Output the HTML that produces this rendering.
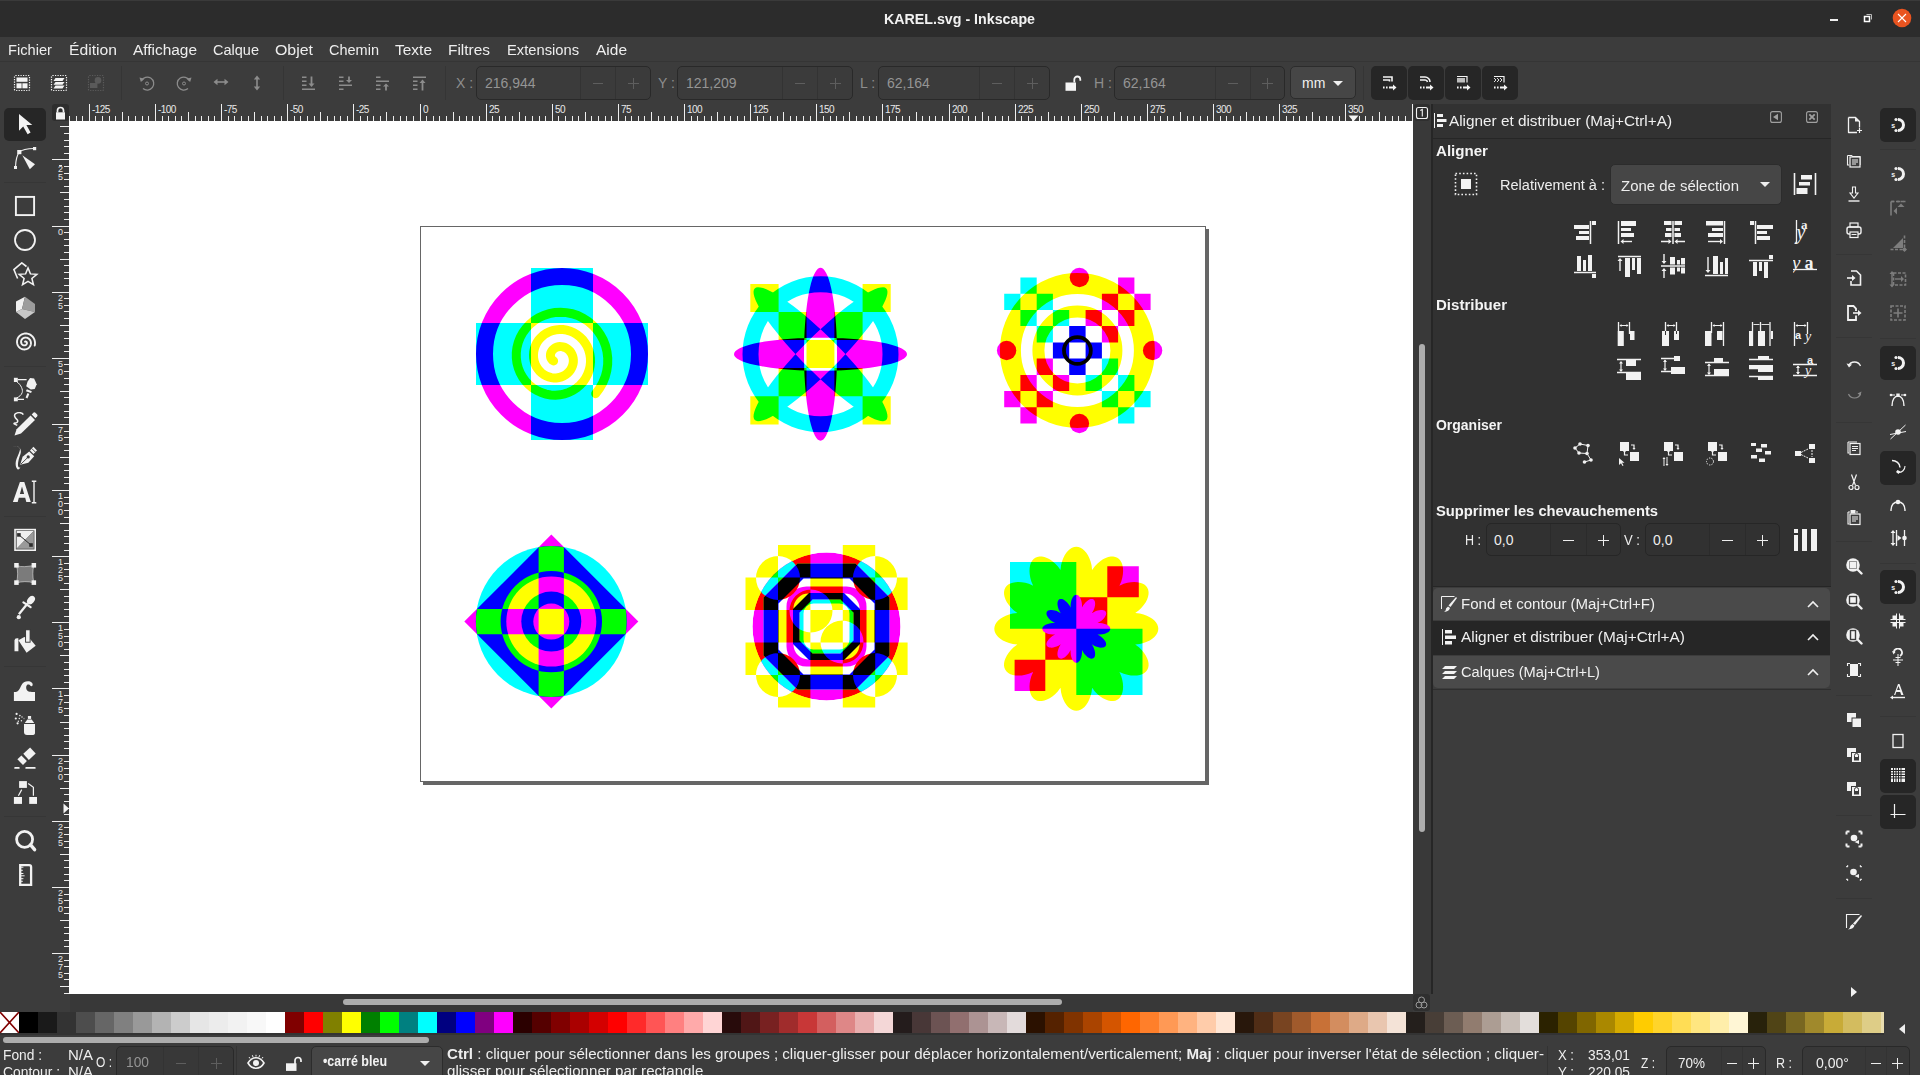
<!DOCTYPE html><html><head><meta charset="utf-8"><style>html,body{margin:0;padding:0}body{width:1920px;height:1075px;position:relative;overflow:hidden;background:#3c3c3c;font-family:"Liberation Sans",sans-serif}svg{display:block}</style></head><body><div style="position:absolute;left:0px;top:0px;width:1920px;height:37px;background:#2c2c2c;"></div>
<div style="position:absolute;left:0px;top:0px;width:1920px;height:1px;background:#3a3a3a;"></div>
<div style="position:absolute;left:884px;top:12.15px;font-size:14px;line-height:14px;height:14px;color:#f2f2f2;font-weight:700;white-space:pre;transform:scaleX(1.0161);transform-origin:0 0;">KAREL.svg - Inkscape</div>
<div style="position:absolute;left:1830px;top:19px;width:8px;height:2px;background:#f0f0f0;"></div>
<svg style="position:absolute;left:1862px;top:12px;" width="12" height="12" viewBox="0 0 12 12"><path d="M4.5 2.5h5v5" fill="none" stroke="#bbb" stroke-width="1"/><rect x="2.5" y="4.5" width="5" height="5" fill="none" stroke="#fff" stroke-width="1.5"/></svg>
<svg style="position:absolute;left:1892px;top:8px;" width="20" height="20" viewBox="0 0 20 20"><circle cx="10" cy="10" r="9.3" fill="#e95420"/><path d="M6 6l8 8M14 6l-8 8" stroke="#fff" stroke-width="1.1"/></svg>
<div style="position:absolute;left:0px;top:61px;width:1920px;height:1px;background:#353535;"></div>
<div style="position:absolute;left:8px;top:43.15px;font-size:14px;line-height:14px;height:14px;color:#eeeeee;font-weight:400;white-space:pre;transform:scaleX(1.0472);transform-origin:0 0;">Fichier</div>
<div style="position:absolute;left:69px;top:43.15px;font-size:14px;line-height:14px;height:14px;color:#eeeeee;font-weight:400;white-space:pre;transform:scaleX(1.1212);transform-origin:0 0;">Édition</div>
<div style="position:absolute;left:133px;top:43.15px;font-size:14px;line-height:14px;height:14px;color:#eeeeee;font-weight:400;white-space:pre;transform:scaleX(1.1011);transform-origin:0 0;">Affichage</div>
<div style="position:absolute;left:213px;top:43.15px;font-size:14px;line-height:14px;height:14px;color:#eeeeee;font-weight:400;white-space:pre;transform:scaleX(1.0366);transform-origin:0 0;">Calque</div>
<div style="position:absolute;left:275px;top:43.15px;font-size:14px;line-height:14px;height:14px;color:#eeeeee;font-weight:400;white-space:pre;transform:scaleX(1.1354);transform-origin:0 0;">Objet</div>
<div style="position:absolute;left:329px;top:43.15px;font-size:14px;line-height:14px;height:14px;color:#eeeeee;font-weight:400;white-space:pre;transform:scaleX(1.0363);transform-origin:0 0;">Chemin</div>
<div style="position:absolute;left:395px;top:43.15px;font-size:14px;line-height:14px;height:14px;color:#eeeeee;font-weight:400;white-space:pre;transform:scaleX(1.1055);transform-origin:0 0;">Texte</div>
<div style="position:absolute;left:448px;top:43.15px;font-size:14px;line-height:14px;height:14px;color:#eeeeee;font-weight:400;white-space:pre;transform:scaleX(1.1016);transform-origin:0 0;">Filtres</div>
<div style="position:absolute;left:507px;top:43.15px;font-size:14px;line-height:14px;height:14px;color:#eeeeee;font-weight:400;white-space:pre;transform:scaleX(1.0513);transform-origin:0 0;">Extensions</div>
<div style="position:absolute;left:596px;top:43.15px;font-size:14px;line-height:14px;height:14px;color:#eeeeee;font-weight:400;white-space:pre;transform:scaleX(1.1059);transform-origin:0 0;">Aide</div>
<svg style="position:absolute;left:13px;top:74px;" width="18" height="18" viewBox="0 0 18 18"><rect x="1.5" y="1.5" width="15" height="15" fill="none" stroke="#f4f4f4" stroke-width="1.2" stroke-dasharray="1.2 1.3" rx="1"/><rect x="3.5" y="3.5" width="11" height="4.3" fill="#f4f4f4"/><rect x="3.5" y="9.3" width="5.1" height="5" fill="#f4f4f4"/><rect x="9.4" y="9.3" width="5.1" height="5" fill="#f4f4f4"/></svg>
<svg style="position:absolute;left:50px;top:74px;" width="18" height="18" viewBox="0 0 18 18"><rect x="1.5" y="1.5" width="15" height="15" fill="none" stroke="#f4f4f4" stroke-width="1.2" stroke-dasharray="1.2 1.3" rx="1"/><path d="M5.5 4h9l-2 3h-9zM5.5 8h9l-2 2.8h-9zM5.5 11.5h9l-2 3h-9z" fill="#f4f4f4"/></svg>
<svg style="position:absolute;left:87px;top:74px;" width="18" height="18" viewBox="0 0 18 18"><rect x="1.5" y="1.5" width="15" height="15" fill="none" stroke="#5a5a5a" stroke-width="1.2" stroke-dasharray="1.2 1.3" rx="1"/><circle cx="11" cy="6.4" r="3.3" fill="#5a5a5a"/><rect x="3" y="9" width="7.4" height="5" fill="#5a5a5a"/></svg>
<div style="position:absolute;left:121px;top:66px;width:1px;height:34px;background:#353535;"></div>
<svg style="position:absolute;left:138px;top:74px;" width="18" height="18" viewBox="0 0 18 18"><path d="M3.5 6.5A6.5 6.5 0 1 1 5 14.5" fill="none" stroke="#8c8c8c" stroke-width="1.3"/><path d="M1.5 3.5l5 1.2-3.6 3.2z" fill="#8c8c8c"/><circle cx="9" cy="9.5" r="1.5" fill="none" stroke="#8c8c8c" stroke-width="1"/></svg>
<svg style="position:absolute;left:175px;top:74px;" width="18" height="18" viewBox="0 0 18 18"><path d="M14.5 6.5A6.5 6.5 0 1 0 13 14.5" fill="none" stroke="#8c8c8c" stroke-width="1.3"/><path d="M16.5 3.5l-5 1.2 3.6 3.2z" fill="#8c8c8c"/><circle cx="9" cy="9.5" r="1.5" fill="none" stroke="#8c8c8c" stroke-width="1"/></svg>
<svg style="position:absolute;left:213px;top:76px;" width="16" height="12" viewBox="0 0 16 12"><path d="M3 6h10" stroke="#8c8c8c" stroke-width="1.6"/><path d="M0.5 6l4-3.2v6.4zM15.5 6l-4-3.2v6.4z" fill="#8c8c8c"/></svg>
<svg style="position:absolute;left:251px;top:75px;" width="12" height="16" viewBox="0 0 12 16"><path d="M6 3v10" stroke="#8c8c8c" stroke-width="1.6"/><path d="M6 0.5l-3.2 4h6.4zM6 15.5l-3.2-4h6.4z" fill="#8c8c8c"/></svg>
<div style="position:absolute;left:283px;top:66px;width:1px;height:34px;background:#353535;"></div>
<svg style="position:absolute;left:302px;top:76px;" width="14" height="15" viewBox="0 0 14 15"><path d="M0 0.5h4.5v1.6h-4.5zM0 4.5h4.5v1.6h-4.5zM0 8.5h4.5v1.6h-4.5zM0 12.5h13v1.6h-13z" fill="#8c8c8c"/><path d="M9.5 0.5v8" stroke="#8c8c8c" stroke-width="1.8"/><path d="M6.5 7.5h6l-3 3.5z" fill="#8c8c8c"/></svg>
<svg style="position:absolute;left:339px;top:76px;" width="14" height="15" viewBox="0 0 14 15"><path d="M0 0.5h4.5v1.6h-4.5zM0 4.5h4.5v1.6h-4.5zM0 8.5h13v1.6h-13zM0 12.5h4.5v1.6h-4.5z" fill="#8c8c8c"/><path d="M10 0.5v4" stroke="#8c8c8c" stroke-width="1.8"/><path d="M7 4h6l-3 3z" fill="#8c8c8c"/></svg>
<svg style="position:absolute;left:376px;top:76px;" width="14" height="15" viewBox="0 0 14 15"><path d="M0 0.5h4.5v1.6h-4.5zM0 4.5h13v1.6h-13zM0 8.5h4.5v1.6h-4.5zM0 12.5h4.5v1.6h-4.5z" fill="#8c8c8c"/><path d="M10 10v4.5" stroke="#8c8c8c" stroke-width="1.8"/><path d="M7 10.5h6l-3-3z" fill="#8c8c8c"/></svg>
<svg style="position:absolute;left:413px;top:76px;" width="14" height="15" viewBox="0 0 14 15"><path d="M0 0.5h13v1.6h-13zM0 4.5h4.5v1.6h-4.5zM0 8.5h4.5v1.6h-4.5zM0 12.5h4.5v1.6h-4.5z" fill="#8c8c8c"/><path d="M9.5 6v8.5" stroke="#8c8c8c" stroke-width="1.8"/><path d="M6.5 7h6l-3-3.5z" fill="#8c8c8c"/></svg>
<div style="position:absolute;left:445px;top:66px;width:1px;height:34px;background:#353535;"></div>
<div style="position:absolute;left:456px;top:76.15px;font-size:14px;line-height:14px;height:14px;color:#8e8e8e;font-weight:400;white-space:pre;">X :</div>
<div style="position:absolute;left:476px;top:66px;width:175px;height:34px;background:#3b3b3b;border:1px solid #292929;border-radius:5px;box-sizing:border-box;"></div>
<div style="position:absolute;left:580px;top:67px;width:1px;height:32px;background:#333333;"></div>
<div style="position:absolute;left:615px;top:67px;width:1px;height:32px;background:#333333;"></div>
<div style="position:absolute;left:485px;top:76.15px;font-size:14px;line-height:14px;height:14px;color:#959595;font-weight:400;white-space:pre;">216,944</div>
<div style="position:absolute;left:592.5px;top:83px;width:10px;height:1px;background:#5e5e5e;"></div>
<div style="position:absolute;left:627.5px;top:83px;width:11px;height:1px;background:#5e5e5e;"></div>
<div style="position:absolute;left:632.5px;top:78px;width:1px;height:11px;background:#5e5e5e;"></div>
<div style="position:absolute;left:658px;top:76.15px;font-size:14px;line-height:14px;height:14px;color:#8e8e8e;font-weight:400;white-space:pre;">Y :</div>
<div style="position:absolute;left:677px;top:66px;width:176px;height:34px;background:#3b3b3b;border:1px solid #292929;border-radius:5px;box-sizing:border-box;"></div>
<div style="position:absolute;left:782px;top:67px;width:1px;height:32px;background:#333333;"></div>
<div style="position:absolute;left:817px;top:67px;width:1px;height:32px;background:#333333;"></div>
<div style="position:absolute;left:686px;top:76.15px;font-size:14px;line-height:14px;height:14px;color:#959595;font-weight:400;white-space:pre;">121,209</div>
<div style="position:absolute;left:794.5px;top:83px;width:10px;height:1px;background:#5e5e5e;"></div>
<div style="position:absolute;left:829.5px;top:83px;width:11px;height:1px;background:#5e5e5e;"></div>
<div style="position:absolute;left:834.5px;top:78px;width:1px;height:11px;background:#5e5e5e;"></div>
<div style="position:absolute;left:860px;top:76.15px;font-size:14px;line-height:14px;height:14px;color:#8e8e8e;font-weight:400;white-space:pre;">L :</div>
<div style="position:absolute;left:878px;top:66px;width:172px;height:34px;background:#3b3b3b;border:1px solid #292929;border-radius:5px;box-sizing:border-box;"></div>
<div style="position:absolute;left:979px;top:67px;width:1px;height:32px;background:#333333;"></div>
<div style="position:absolute;left:1014px;top:67px;width:1px;height:32px;background:#333333;"></div>
<div style="position:absolute;left:887px;top:76.15px;font-size:14px;line-height:14px;height:14px;color:#959595;font-weight:400;white-space:pre;">62,164</div>
<div style="position:absolute;left:991.5px;top:83px;width:10px;height:1px;background:#5e5e5e;"></div>
<div style="position:absolute;left:1026.5px;top:83px;width:11px;height:1px;background:#5e5e5e;"></div>
<div style="position:absolute;left:1031.5px;top:78px;width:1px;height:11px;background:#5e5e5e;"></div>
<div style="position:absolute;left:1094px;top:76.15px;font-size:14px;line-height:14px;height:14px;color:#8e8e8e;font-weight:400;white-space:pre;">H :</div>
<div style="position:absolute;left:1114px;top:66px;width:171px;height:34px;background:#3b3b3b;border:1px solid #292929;border-radius:5px;box-sizing:border-box;"></div>
<div style="position:absolute;left:1215px;top:67px;width:1px;height:32px;background:#333333;"></div>
<div style="position:absolute;left:1250px;top:67px;width:1px;height:32px;background:#333333;"></div>
<div style="position:absolute;left:1123px;top:76.15px;font-size:14px;line-height:14px;height:14px;color:#959595;font-weight:400;white-space:pre;">62,164</div>
<div style="position:absolute;left:1227.5px;top:83px;width:10px;height:1px;background:#5e5e5e;"></div>
<div style="position:absolute;left:1262.0px;top:83px;width:11px;height:1px;background:#5e5e5e;"></div>
<div style="position:absolute;left:1267.0px;top:78px;width:1px;height:11px;background:#5e5e5e;"></div>
<svg style="position:absolute;left:1064px;top:75px;" width="18" height="17" viewBox="0 0 18 17"><path d="M10.3 7.5V4.5a3 3 0 0 1 6 0v1.2" fill="none" stroke="#f4f4f4" stroke-width="1.8"/><rect x="1.5" y="7.5" width="10.5" height="8.3" fill="#f4f4f4"/></svg>
<div style="position:absolute;left:1290px;top:66px;width:66px;height:33px;background:#464646;border:1px solid #2c2c2c;border-radius:5px;box-sizing:border-box;"></div>
<div style="position:absolute;left:1302px;top:76.15px;font-size:14px;line-height:14px;height:14px;color:#f0f0f0;font-weight:400;white-space:pre;">mm</div>
<svg style="position:absolute;left:1332px;top:80px;" width="12" height="7" viewBox="0 0 12 7"><path d="M1 1h10l-5 5z" fill="#f0f0f0"/></svg>
<div style="position:absolute;left:1363px;top:66px;width:1px;height:34px;background:#353535;"></div>
<div style="position:absolute;left:1371px;top:66px;width:36px;height:34px;background:#262626;border-radius:5px;"></div>
<svg style="position:absolute;left:1382px;top:75px;" width="16" height="16" viewBox="0 0 16 16"><path d="M1 2h9v4.5M1 5h6.5v1.5" fill="none" stroke="#f4f4f4" stroke-width="1.6"/><path d="M1 12.5h1.6M4 12.5h1.6M7 12.5h5" stroke="#f4f4f4" stroke-width="1.8"/><path d="M11 9.5l3.5 3-3.5 3z" fill="#f4f4f4"/></svg>
<div style="position:absolute;left:1408px;top:66px;width:36px;height:34px;background:#262626;border-radius:5px;"></div>
<svg style="position:absolute;left:1419px;top:75px;" width="16" height="16" viewBox="0 0 16 16"><path d="M1 2h5a5 5 0 0 1 5 5M1 5h5a2.5 2.5 0 0 1 2.5 2" fill="none" stroke="#f4f4f4" stroke-width="1.6"/><path d="M1 12.5h1.6M4 12.5h1.6M7 12.5h5" stroke="#f4f4f4" stroke-width="1.8"/><path d="M11 9.5l3.5 3-3.5 3z" fill="#f4f4f4"/></svg>
<div style="position:absolute;left:1445px;top:66px;width:36px;height:34px;background:#262626;border-radius:5px;"></div>
<svg style="position:absolute;left:1456px;top:75px;" width="16" height="16" viewBox="0 0 16 16"><path d="M1 1.5h10v6" fill="none" stroke="#f4f4f4" stroke-width="1.2"/><rect x="1" y="3" width="8" height="4.5" fill="#bdbdbd"/><path d="M1 12.5h1.6M4 12.5h1.6M7 12.5h5" stroke="#f4f4f4" stroke-width="1.8"/><path d="M11 9.5l3.5 3-3.5 3z" fill="#f4f4f4"/></svg>
<div style="position:absolute;left:1482px;top:66px;width:36px;height:34px;background:#262626;border-radius:5px;"></div>
<svg style="position:absolute;left:1493px;top:75px;" width="16" height="16" viewBox="0 0 16 16"><path d="M1 1.5h10v6" fill="none" stroke="#f4f4f4" stroke-width="1.2"/><path d="M1 3l2 2-2 2M4 3l2 2-2 2M7 3l2 2-2 2" fill="none" stroke="#e0e0e0" stroke-width="1"/><path d="M1 12.5h1.6M4 12.5h1.6M7 12.5h5" stroke="#f4f4f4" stroke-width="1.8"/><path d="M11 9.5l3.5 3-3.5 3z" fill="#f4f4f4"/></svg>
<div style="position:absolute;left:4px;top:108px;width:42px;height:33px;background:#262626;border-radius:5px;"></div>
<div style="position:absolute;left:4px;top:182px;width:42px;height:1px;background:#363636;"></div>
<div style="position:absolute;left:4px;top:366px;width:42px;height:1px;background:#363636;"></div>
<div style="position:absolute;left:4px;top:516px;width:42px;height:1px;background:#363636;"></div>
<div style="position:absolute;left:4px;top:666px;width:42px;height:1px;background:#363636;"></div>
<div style="position:absolute;left:4px;top:816px;width:42px;height:1px;background:#363636;"></div>
<svg style="position:absolute;left:13px;top:112px;" width="26" height="26" viewBox="0 0 26 26"><path d="M6 2V18.8L10.2 14.6L14.6 22.2L17.6 20.5L13.4 13H19.3Z" fill="#f2f2f2"/></svg>
<svg style="position:absolute;left:13px;top:146px;" width="26" height="26" viewBox="0 0 26 26"><path d="M2.5 21C2.8 13 4.5 8.5 6.2 6.2C9 3.5 15 2.6 21.5 2.5" fill="none" stroke="#f2f2f2" stroke-width="1.1"/><rect x="1" y="20" width="3" height="3" fill="#f2f2f2"/><rect x="4.2" y="4" width="4.2" height="4.2" fill="#f2f2f2"/><rect x="20" y="1" width="3.2" height="3.2" fill="#f2f2f2"/><path d="M9.3 9.3L22 18.2L16.8 23.2Z" fill="#f2f2f2"/></svg>
<svg style="position:absolute;left:13px;top:194px;" width="26" height="26" viewBox="0 0 26 26"><rect x="2.9" y="2.9" width="18.2" height="18.2" fill="none" stroke="#f2f2f2" stroke-width="1.9"/></svg>
<svg style="position:absolute;left:13px;top:228px;" width="26" height="26" viewBox="0 0 26 26"><circle cx="12" cy="12" r="10" fill="none" stroke="#f2f2f2" stroke-width="1.8"/></svg>
<svg style="position:absolute;left:13px;top:262px;" width="26" height="26" viewBox="0 0 26 26"><path d="M4.6 16.5L0.9 7.6L8.8 0.9L13.5 4.5" fill="none" stroke="#f2f2f2" stroke-width="1.6"/><path d="M15.00 5.90 L17.41 11.88 L23.84 12.33 L18.90 16.47 L20.47 22.72 L15.00 19.30 L9.53 22.72 L11.10 16.47 L6.16 12.33 L12.59 11.88Z" fill="none" stroke="#f2f2f2" stroke-width="1.5" stroke-linejoin="miter"/></svg>
<svg style="position:absolute;left:13px;top:296px;" width="26" height="26" viewBox="0 0 26 26"><path d="M9 13L3 16V5.5L12 0.8Z" fill="#f0f0f0"/><path d="M9 13L12 0.8L22 8V16Z" fill="#9c9c9c"/><path d="M9 13L22 16L12 23L3 16Z" fill="#c8c8c8"/></svg>
<svg style="position:absolute;left:12px;top:330px;" width="26" height="26" viewBox="0 0 26 26"><path d="M13.00 11.70 L13.08 11.64 L13.16 11.60 L13.26 11.56 L13.37 11.53 L13.48 11.52 L13.59 11.51 L13.72 11.52 L13.84 11.55 L13.97 11.59 L14.09 11.64 L14.21 11.71 L14.33 11.80 L14.44 11.90 L14.55 12.01 L14.64 12.14 L14.73 12.28 L14.80 12.44 L14.85 12.60 L14.90 12.78 L14.92 12.96 L14.93 13.15 L14.91 13.35 L14.88 13.54 L14.83 13.74 L14.75 13.94 L14.66 14.13 L14.54 14.32 L14.41 14.50 L14.25 14.67 L14.07 14.83 L13.88 14.97 L13.67 15.10 L13.44 15.20 L13.20 15.29 L12.94 15.36 L12.68 15.40 L12.41 15.41 L12.13 15.41 L11.85 15.37 L11.57 15.31 L11.29 15.22 L11.02 15.10 L10.75 14.95 L10.50 14.78 L10.25 14.58 L10.03 14.35 L9.82 14.10 L9.63 13.83 L9.47 13.54 L9.33 13.23 L9.23 12.90 L9.15 12.56 L9.10 12.21 L9.08 11.85 L9.10 11.48 L9.15 11.11 L9.24 10.75 L9.36 10.39 L9.52 10.03 L9.71 9.69 L9.94 9.36 L10.20 9.05 L10.48 8.77 L10.80 8.50 L11.15 8.27 L11.52 8.06 L11.91 7.89 L12.32 7.75 L12.75 7.65 L13.19 7.59 L13.64 7.57 L14.10 7.59 L14.55 7.65 L15.01 7.76 L15.45 7.91 L15.89 8.10 L16.31 8.33 L16.72 8.61 L17.10 8.92 L17.45 9.27 L17.77 9.65 L18.06 10.07 L18.32 10.51 L18.53 10.99 L18.70 11.48 L18.83 12.00 L18.91 12.52 L18.94 13.06 L18.93 13.61 L18.86 14.15 L18.74 14.70 L18.57 15.23 L18.35 15.75 L18.09 16.26 L17.77 16.74 L17.41 17.19 L17.00 17.62 L16.56 18.01 L16.07 18.36 L15.55 18.67 L15.01 18.93 L14.43 19.14 L13.83 19.30 L13.22 19.41 L12.59 19.46 L11.96 19.45 L11.32 19.38 L10.69 19.26 L10.06 19.08 L9.45 18.84 L8.86 18.54 L8.30 18.19 L7.76 17.78 L7.26 17.32 L6.80 16.82 L6.39 16.27 L6.02 15.69 L5.70 15.06 L5.45 14.41 L5.25 13.73 L5.11 13.03 L5.03 12.31 L5.03 11.59 L5.08 10.86 L5.21 10.14 L5.40 9.42 L5.65 8.72 L5.98 8.04 L6.36 7.39 L6.80 6.77 L7.31 6.19 L7.86 5.66 L8.47 5.17 L9.12 4.74 L9.82 4.37 L10.55 4.06 L11.31 3.81 L12.09 3.64 L12.89 3.53 L13.71 3.50 L14.53 3.55 L15.34 3.66 L16.15 3.86 L16.94 4.12 L17.71 4.46 L18.45 4.87 L19.16 5.35 L19.82 5.89 L20.43 6.50 L20.99 7.16 L21.49 7.87 L21.93 8.64 L22.30 9.44 L22.59 10.28 L22.81 11.14 L22.95 12.03 L23.01 12.93 L22.99 13.84 L22.89 14.75 L22.70 15.65" fill="none" stroke="#f2f2f2" stroke-width="1.9" stroke-linecap="round"/></svg>
<svg style="position:absolute;left:13px;top:377px;" width="26" height="26" viewBox="0 0 26 26"><rect x="0.9" y="0.8" width="3.9" height="4.2" fill="#f2f2f2"/><rect x="0.9" y="20.4" width="3.9" height="3.9" fill="#f2f2f2"/><path d="M4.8 2.6H13.6M4.8 22.4H11" stroke="#f2f2f2" stroke-width="1.2"/><path d="M3.5 4.5C8.5 8 10 13 9.2 15.5C8.5 18 6 20 3.5 21" fill="none" stroke="#f2f2f2" stroke-width="1"/><path d="M14.5 4.7L17.1 1.1L21.1 1.6L23.7 7.3L21.7 11.9L17.8 12.5L13.2 9.3Z" fill="#f2f2f2"/><path d="M13.9 12.3L18.8 14.2L18.1 15.9L12.9 14.2Z" fill="#f2f2f2"/><path d="M15.4 16.5L13.5 21" stroke="#f2f2f2" stroke-width="2"/></svg>
<svg style="position:absolute;left:13px;top:412px;" width="26" height="26" viewBox="0 0 26 26"><path d="M1.5 23.5L3.6 17.2L17.6 3.6L22 8L8 21.6Z" fill="#f2f2f2"/><path d="M18.7 2.4L20.6 0.6Q21.5 0 22.4 0.7L24.2 2.5Q24.9 3.4 24.2 4.3L22.4 6.2Z" fill="#f2f2f2"/><path d="M10.3 2.6C9.3 0.6 5.5 -0.2 2.6 1.7C0.5 3.2 2 6 3.8 7.4C5.2 8.6 5 10.3 3.2 10.9C2.2 11.2 1.2 10.8 1 11.6C2 12.3 3.2 12.8 4.3 13.3" fill="none" stroke="#f2f2f2" stroke-width="1.5"/></svg>
<svg style="position:absolute;left:13px;top:446px;" width="26" height="26" viewBox="0 0 26 26"><path d="M0 1C2.5 -0.3 6.5 0 7 3C7.2 5 5 9 3.5 13C2 17 2.5 21.5 4.5 23.2C5.5 24 7 22.5 7.3 21.2C6.5 22 5.2 21.5 5 19.5C4.7 17 6 12 7.3 8.5C8.5 5 8 1.5 4 0.5C2.5 0.1 1 0.4 0 1Z" fill="#f2f2f2"/><path d="M7.2 18.8L9.6 10.8L16.2 5.6L21.2 10.2L15.3 16.8Z" fill="#f2f2f2"/><circle cx="15.2" cy="10.9" r="1.6" fill="#3c3c3c"/><path d="M14.3 11.9L8 18" stroke="#3c3c3c" stroke-width="0.9"/><path d="M17 4.4L20.4 0.8L24 4.5L20.5 8Z" fill="#f2f2f2"/><path d="M18.8 2.5L22.3 6" stroke="#3c3c3c" stroke-width="0.9"/></svg>
<svg style="position:absolute;left:12px;top:480px;" width="26" height="26" viewBox="0 0 26 26"><path d="M0.9 21.9L7.9 2H12.3L18.8 21.9H14.3L13.2 17.8H6.8L5.7 21.9ZM7.9 14H12.1L10 6.4Z" fill="#f2f2f2"/><path d="M22 1.2V22.7M19.8 1.2H24.3M19.8 22.7H24.3" stroke="#f2f2f2" stroke-width="1.4"/></svg>
<svg style="position:absolute;left:13px;top:528px;" width="26" height="26" viewBox="0 0 26 26"><rect x="2" y="1.6" width="20.2" height="20.6" fill="none" stroke="#f2f2f2" stroke-width="1.6"/><path d="M3.6 3.1H20.8L3.6 20.8Z" fill="#efefef"/><path d="M20.8 3.1V20.8H3.6Z" fill="#9a9a9a"/><path d="M5.9 6.9L18 17" stroke="#2e2e2e" stroke-width="1"/><rect x="4.1" y="5.1" width="3.6" height="3.6" fill="#2e2e2e"/><rect x="16.2" y="15.2" width="3.6" height="3.6" fill="#2e2e2e"/></svg>
<svg style="position:absolute;left:13px;top:562px;" width="26" height="26" viewBox="0 0 26 26"><defs><pattern id="chk" width="2" height="2" patternUnits="userSpaceOnUse" patternTransform="rotate(12)"><rect width="2" height="2" fill="#3a3a3a"/><circle cx="1" cy="1" r="0.75" fill="#dcdcdc"/></pattern></defs><path d="M3.5 3.5C9 5.5 14 4.5 20.8 3.5C19.5 9 19.5 14 20.8 20.8C14.5 19 9 19.5 3.5 20.8C5 14.5 5 9 3.5 3.5Z" fill="url(#chk)" stroke="#e0e0e0" stroke-width="0.6"/><g fill="#f2f2f2"><rect x="1.2" y="1" width="4.5" height="4.6"/><rect x="18.6" y="1" width="4.5" height="4.6"/><rect x="1.2" y="18.3" width="4.5" height="4.6"/><rect x="18.6" y="18.3" width="4.5" height="4.6"/></g></svg>
<svg style="position:absolute;left:13px;top:594px;" width="26" height="26" viewBox="0 0 26 26"><ellipse cx="18" cy="6.2" rx="3.3" ry="4.7" transform="rotate(40 18 6.2)" fill="#f2f2f2"/><path d="M10.4 8.3L17.6 13.1" stroke="#f2f2f2" stroke-width="2.2" stroke-linecap="round"/><path d="M14.8 9.2L5.9 20.2" stroke="#f2f2f2" stroke-width="2.3"/><circle cx="5.8" cy="23.2" r="2.1" fill="#f2f2f2"/></svg>
<svg style="position:absolute;left:13px;top:628px;" width="26" height="26" viewBox="0 0 26 26"><path d="M5.4 12.2L11.3 9L17.1 10.9L22.7 17.7L13.6 24.8Z" fill="#f2f2f2"/><path d="M1.5 12.5Q1.5 10.3 4 10.3H5.4V23.3H1.5Z" fill="#f2f2f2"/><rect x="12.6" y="1.8" width="4.5" height="12.4" fill="#f2f2f2" stroke="#2f2f2f" stroke-width="0.9"/></svg>
<svg style="position:absolute;left:13px;top:680px;" width="26" height="26" viewBox="0 0 26 26"><path d="M0.9 11.9H3C5.5 11.5 6.5 9.5 8 6C9.5 2.5 12 1.2 15 1.2C18 1.2 20.2 3 19.6 5.3C19.2 6.6 17.8 6.4 17.4 5.8C16.8 4.6 15 4.2 14 5.1C12.5 6.6 13 10.6 15.6 11.5C17.2 12 20 11.9 22 11.9V21H0.9Z" fill="#f2f2f2"/></svg>
<svg style="position:absolute;left:13px;top:712px;" width="26" height="26" viewBox="0 0 26 26"><rect x="14.9" y="4" width="3.2" height="2.9" fill="#f2f2f2"/><path d="M11.8 10.9L14.3 7.6H18.7L21.2 10.9Z" fill="#f2f2f2"/><path d="M11 12H22V21Q22 23 19 23H14Q11 23 11 20Z" fill="#f2f2f2"/><g fill="#f2f2f2"><circle cx="3.6" cy="1.9" r="1.1"/><circle cx="6.9" cy="3.6" r="0.8"/><circle cx="2.8" cy="6.5" r="1.1"/><circle cx="6.3" cy="6.5" r="0.7"/><circle cx="9" cy="5" r="0.7"/><circle cx="5.3" cy="9.2" r="0.7"/><circle cx="8.4" cy="8.8" r="0.7"/><circle cx="4.6" cy="11.3" r="1.1"/></g><circle cx="11" cy="6.6" r="0.8" fill="#888"/></svg>
<svg style="position:absolute;left:13px;top:744px;" width="26" height="26" viewBox="0 0 26 26"><path d="M17.1 3.5L22.7 9.4L15.8 15.9L10.3 9.7Z" fill="#f2f2f2"/><path d="M8.4 11.4L13.9 16.9L10 21.1L4.4 15.3Z" fill="#f2f2f2"/><rect x="1.2" y="23" width="5.5" height="1.8" rx="0.9" fill="#f2f2f2"/><rect x="12.3" y="23" width="10.4" height="1.8" rx="0.9" fill="#f2f2f2"/></svg>
<svg style="position:absolute;left:13px;top:780px;" width="26" height="26" viewBox="0 0 26 26"><rect x="6.1" y="1.1" width="7.8" height="6.8" fill="#f2f2f2"/><rect x="0.9" y="17" width="8.1" height="6.9" fill="#f2f2f2"/><rect x="16.2" y="17" width="7.8" height="6.9" fill="#f2f2f2"/><path d="M15.2 3.4L20.4 7.3V15.8M8.7 9.6L5.4 15.8" fill="none" stroke="#f2f2f2" stroke-width="1.2"/></svg>
<svg style="position:absolute;left:13px;top:827px;" width="26" height="26" viewBox="0 0 26 26"><circle cx="11.6" cy="12.3" r="8" fill="none" stroke="#f2f2f2" stroke-width="2.8"/><path d="M17.6 17.9L21.6 22.6" stroke="#f2f2f2" stroke-width="3.4" stroke-linecap="round"/></svg>
<svg style="position:absolute;left:13px;top:862px;" width="26" height="26" viewBox="0 0 26 26"><path d="M7.2 3.1H16.2Q18.1 3.1 18.1 5V22.9H7.2Z" fill="none" stroke="#f2f2f2" stroke-width="2.3"/><path d="M7.5 5.2H10.4M7.5 8.3H9.8M7.5 11.5H10.4M7.5 13.8H11.6M7.5 16.7H10.4M7.5 19.3H9.8" stroke="#f2f2f2" stroke-width="1"/></svg>
<div style="position:absolute;left:52px;top:104px;width:17px;height:17px;background:#2e2e2e;border-radius:3px;"></div>
<svg style="position:absolute;left:54px;top:106px;" width="13" height="14" viewBox="0 0 13 14"><path d="M3.5 6.5V4.5a3 3 0 0 1 6 0v2" fill="none" stroke="#f4f4f4" stroke-width="1.7"/><rect x="2" y="6.3" width="9" height="7.2" fill="#f4f4f4"/></svg>
<svg style="position:absolute;left:69px;top:104px;" width="1344" height="17" viewBox="0 0 1344 17"><path d="M0.5 12V17M7.5 12V17M13.5 12V17M20.5 0V17M26.5 12V17M33.5 12V17M40.5 12V17M46.5 12V17M53.5 8V17M59.5 12V17M66.5 12V17M73.5 12V17M79.5 12V17M86.5 0V17M93.5 12V17M99.5 12V17M106.5 12V17M112.5 12V17M119.5 8V17M126.5 12V17M132.5 12V17M139.5 12V17M145.5 12V17M152.5 0V17M159.5 12V17M165.5 12V17M172.5 12V17M179.5 12V17M185.5 8V17M192.5 12V17M198.5 12V17M205.5 12V17M212.5 12V17M218.5 0V17M225.5 12V17M231.5 12V17M238.5 12V17M245.5 12V17M251.5 8V17M258.5 12V17M265.5 12V17M271.5 12V17M278.5 12V17M284.5 0V17M291.5 12V17M298.5 12V17M304.5 12V17M311.5 12V17M317.5 8V17M324.5 12V17M331.5 12V17M337.5 12V17M344.5 12V17M351.5 0V17M357.5 12V17M364.5 12V17M370.5 12V17M377.5 12V17M384.5 8V17M390.5 12V17M397.5 12V17M403.5 12V17M410.5 12V17M417.5 0V17M423.5 12V17M430.5 12V17M436.5 12V17M443.5 12V17M450.5 8V17M456.5 12V17M463.5 12V17M470.5 12V17M476.5 12V17M483.5 0V17M489.5 12V17M496.5 12V17M503.5 12V17M509.5 12V17M516.5 8V17M522.5 12V17M529.5 12V17M536.5 12V17M542.5 12V17M549.5 0V17M556.5 12V17M562.5 12V17M569.5 12V17M575.5 12V17M582.5 8V17M589.5 12V17M595.5 12V17M602.5 12V17M608.5 12V17M615.5 0V17M622.5 12V17M628.5 12V17M635.5 12V17M642.5 12V17M648.5 8V17M655.5 12V17M661.5 12V17M668.5 12V17M675.5 12V17M681.5 0V17M688.5 12V17M694.5 12V17M701.5 12V17M708.5 12V17M714.5 8V17M721.5 12V17M727.5 12V17M734.5 12V17M741.5 12V17M747.5 0V17M754.5 12V17M761.5 12V17M767.5 12V17M774.5 12V17M780.5 8V17M787.5 12V17M794.5 12V17M800.5 12V17M807.5 12V17M813.5 0V17M820.5 12V17M827.5 12V17M833.5 12V17M840.5 12V17M847.5 8V17M853.5 12V17M860.5 12V17M866.5 12V17M873.5 12V17M880.5 0V17M886.5 12V17M893.5 12V17M899.5 12V17M906.5 12V17M913.5 8V17M919.5 12V17M926.5 12V17M933.5 12V17M939.5 12V17M946.5 0V17M952.5 12V17M959.5 12V17M966.5 12V17M972.5 12V17M979.5 8V17M985.5 12V17M992.5 12V17M999.5 12V17M1005.5 12V17M1012.5 0V17M1019.5 12V17M1025.5 12V17M1032.5 12V17M1038.5 12V17M1045.5 8V17M1052.5 12V17M1058.5 12V17M1065.5 12V17M1071.5 12V17M1078.5 0V17M1085.5 12V17M1091.5 12V17M1098.5 12V17M1104.5 12V17M1111.5 8V17M1118.5 12V17M1124.5 12V17M1131.5 12V17M1138.5 12V17M1144.5 0V17M1151.5 12V17M1157.5 12V17M1164.5 12V17M1171.5 12V17M1177.5 8V17M1184.5 12V17M1190.5 12V17M1197.5 12V17M1204.5 12V17M1210.5 0V17M1217.5 12V17M1224.5 12V17M1230.5 12V17M1237.5 12V17M1243.5 8V17M1250.5 12V17M1257.5 12V17M1263.5 12V17M1270.5 12V17M1276.5 0V17M1283.5 12V17M1290.5 12V17M1296.5 12V17M1303.5 12V17M1310.5 8V17M1316.5 12V17M1323.5 12V17M1329.5 12V17M1336.5 12V17M1343.5 0V17" stroke="#eeeeee" stroke-width="1"/></svg>
<div style="position:absolute;left:92px;top:104.53px;font-size:10px;line-height:10px;height:10px;color:#e8e8e8;font-weight:400;white-space:pre;letter-spacing:-0.6px;">-125</div>
<div style="position:absolute;left:158px;top:104.53px;font-size:10px;line-height:10px;height:10px;color:#e8e8e8;font-weight:400;white-space:pre;letter-spacing:-0.6px;">-100</div>
<div style="position:absolute;left:224px;top:104.53px;font-size:10px;line-height:10px;height:10px;color:#e8e8e8;font-weight:400;white-space:pre;letter-spacing:-0.6px;">-75</div>
<div style="position:absolute;left:290px;top:104.53px;font-size:10px;line-height:10px;height:10px;color:#e8e8e8;font-weight:400;white-space:pre;letter-spacing:-0.6px;">-50</div>
<div style="position:absolute;left:356px;top:104.53px;font-size:10px;line-height:10px;height:10px;color:#e8e8e8;font-weight:400;white-space:pre;letter-spacing:-0.6px;">-25</div>
<div style="position:absolute;left:423px;top:104.53px;font-size:10px;line-height:10px;height:10px;color:#e8e8e8;font-weight:400;white-space:pre;letter-spacing:-0.6px;">0</div>
<div style="position:absolute;left:489px;top:104.53px;font-size:10px;line-height:10px;height:10px;color:#e8e8e8;font-weight:400;white-space:pre;letter-spacing:-0.6px;">25</div>
<div style="position:absolute;left:555px;top:104.53px;font-size:10px;line-height:10px;height:10px;color:#e8e8e8;font-weight:400;white-space:pre;letter-spacing:-0.6px;">50</div>
<div style="position:absolute;left:621px;top:104.53px;font-size:10px;line-height:10px;height:10px;color:#e8e8e8;font-weight:400;white-space:pre;letter-spacing:-0.6px;">75</div>
<div style="position:absolute;left:687px;top:104.53px;font-size:10px;line-height:10px;height:10px;color:#e8e8e8;font-weight:400;white-space:pre;letter-spacing:-0.6px;">100</div>
<div style="position:absolute;left:753px;top:104.53px;font-size:10px;line-height:10px;height:10px;color:#e8e8e8;font-weight:400;white-space:pre;letter-spacing:-0.6px;">125</div>
<div style="position:absolute;left:819px;top:104.53px;font-size:10px;line-height:10px;height:10px;color:#e8e8e8;font-weight:400;white-space:pre;letter-spacing:-0.6px;">150</div>
<div style="position:absolute;left:885px;top:104.53px;font-size:10px;line-height:10px;height:10px;color:#e8e8e8;font-weight:400;white-space:pre;letter-spacing:-0.6px;">175</div>
<div style="position:absolute;left:952px;top:104.53px;font-size:10px;line-height:10px;height:10px;color:#e8e8e8;font-weight:400;white-space:pre;letter-spacing:-0.6px;">200</div>
<div style="position:absolute;left:1018px;top:104.53px;font-size:10px;line-height:10px;height:10px;color:#e8e8e8;font-weight:400;white-space:pre;letter-spacing:-0.6px;">225</div>
<div style="position:absolute;left:1084px;top:104.53px;font-size:10px;line-height:10px;height:10px;color:#e8e8e8;font-weight:400;white-space:pre;letter-spacing:-0.6px;">250</div>
<div style="position:absolute;left:1150px;top:104.53px;font-size:10px;line-height:10px;height:10px;color:#e8e8e8;font-weight:400;white-space:pre;letter-spacing:-0.6px;">275</div>
<div style="position:absolute;left:1216px;top:104.53px;font-size:10px;line-height:10px;height:10px;color:#e8e8e8;font-weight:400;white-space:pre;letter-spacing:-0.6px;">300</div>
<div style="position:absolute;left:1282px;top:104.53px;font-size:10px;line-height:10px;height:10px;color:#e8e8e8;font-weight:400;white-space:pre;letter-spacing:-0.6px;">325</div>
<div style="position:absolute;left:1348px;top:104.53px;font-size:10px;line-height:10px;height:10px;color:#e8e8e8;font-weight:400;white-space:pre;letter-spacing:-0.6px;">350</div>
<svg style="position:absolute;left:52px;top:121px;" width="17" height="873" viewBox="0 0 17 873"><path d="M8 5.5H17M12 12.5H17M12 19.5H17M12 25.5H17M12 32.5H17M0 38.5H17M12 45.5H17M12 52.5H17M12 58.5H17M12 65.5H17M8 71.5H17M12 78.5H17M12 85.5H17M12 91.5H17M12 98.5H17M0 105.5H17M12 111.5H17M12 118.5H17M12 124.5H17M12 131.5H17M8 138.5H17M12 144.5H17M12 151.5H17M12 157.5H17M12 164.5H17M0 171.5H17M12 177.5H17M12 184.5H17M12 190.5H17M12 197.5H17M8 204.5H17M12 210.5H17M12 217.5H17M12 224.5H17M12 230.5H17M0 237.5H17M12 243.5H17M12 250.5H17M12 257.5H17M12 263.5H17M8 270.5H17M12 276.5H17M12 283.5H17M12 290.5H17M12 296.5H17M0 303.5H17M12 310.5H17M12 316.5H17M12 323.5H17M12 329.5H17M8 336.5H17M12 343.5H17M12 349.5H17M12 356.5H17M12 362.5H17M0 369.5H17M12 376.5H17M12 382.5H17M12 389.5H17M12 396.5H17M8 402.5H17M12 409.5H17M12 415.5H17M12 422.5H17M12 429.5H17M0 435.5H17M12 442.5H17M12 448.5H17M12 455.5H17M12 462.5H17M8 468.5H17M12 475.5H17M12 481.5H17M12 488.5H17M12 495.5H17M0 501.5H17M12 508.5H17M12 515.5H17M12 521.5H17M12 528.5H17M8 534.5H17M12 541.5H17M12 548.5H17M12 554.5H17M12 561.5H17M0 567.5H17M12 574.5H17M12 581.5H17M12 587.5H17M12 594.5H17M8 601.5H17M12 607.5H17M12 614.5H17M12 620.5H17M12 627.5H17M0 634.5H17M12 640.5H17M12 647.5H17M12 653.5H17M12 660.5H17M8 667.5H17M12 673.5H17M12 680.5H17M12 687.5H17M12 693.5H17M0 700.5H17M12 706.5H17M12 713.5H17M12 720.5H17M12 726.5H17M8 733.5H17M12 739.5H17M12 746.5H17M12 753.5H17M12 759.5H17M0 766.5H17M12 773.5H17M12 779.5H17M12 786.5H17M12 792.5H17M8 799.5H17M12 806.5H17M12 812.5H17M12 819.5H17M12 825.5H17M0 832.5H17M12 839.5H17M12 845.5H17M12 852.5H17M12 858.5H17M8 865.5H17M12 872.5H17" stroke="#eeeeee" stroke-width="1"/></svg>
<div style="position:absolute;left:59px;top:165px;width:3px;height:1px;background:#e8e8e8;"></div>
<div style="position:absolute;left:58px;top:165.38px;font-size:9px;line-height:9px;height:9px;color:#e8e8e8;font-weight:400;white-space:pre;">2</div>
<div style="position:absolute;left:58px;top:173.38px;font-size:9px;line-height:9px;height:9px;color:#e8e8e8;font-weight:400;white-space:pre;">5</div>
<div style="position:absolute;left:58px;top:228.38px;font-size:9px;line-height:9px;height:9px;color:#e8e8e8;font-weight:400;white-space:pre;">0</div>
<div style="position:absolute;left:58px;top:294.38px;font-size:9px;line-height:9px;height:9px;color:#e8e8e8;font-weight:400;white-space:pre;">2</div>
<div style="position:absolute;left:58px;top:302.38px;font-size:9px;line-height:9px;height:9px;color:#e8e8e8;font-weight:400;white-space:pre;">5</div>
<div style="position:absolute;left:58px;top:360.38px;font-size:9px;line-height:9px;height:9px;color:#e8e8e8;font-weight:400;white-space:pre;">5</div>
<div style="position:absolute;left:58px;top:368.38px;font-size:9px;line-height:9px;height:9px;color:#e8e8e8;font-weight:400;white-space:pre;">0</div>
<div style="position:absolute;left:58px;top:426.38px;font-size:9px;line-height:9px;height:9px;color:#e8e8e8;font-weight:400;white-space:pre;">7</div>
<div style="position:absolute;left:58px;top:434.38px;font-size:9px;line-height:9px;height:9px;color:#e8e8e8;font-weight:400;white-space:pre;">5</div>
<div style="position:absolute;left:58px;top:492.38px;font-size:9px;line-height:9px;height:9px;color:#e8e8e8;font-weight:400;white-space:pre;">1</div>
<div style="position:absolute;left:58px;top:500.38px;font-size:9px;line-height:9px;height:9px;color:#e8e8e8;font-weight:400;white-space:pre;">0</div>
<div style="position:absolute;left:58px;top:508.38px;font-size:9px;line-height:9px;height:9px;color:#e8e8e8;font-weight:400;white-space:pre;">0</div>
<div style="position:absolute;left:58px;top:558.38px;font-size:9px;line-height:9px;height:9px;color:#e8e8e8;font-weight:400;white-space:pre;">1</div>
<div style="position:absolute;left:58px;top:566.38px;font-size:9px;line-height:9px;height:9px;color:#e8e8e8;font-weight:400;white-space:pre;">2</div>
<div style="position:absolute;left:58px;top:574.38px;font-size:9px;line-height:9px;height:9px;color:#e8e8e8;font-weight:400;white-space:pre;">5</div>
<div style="position:absolute;left:58px;top:624.38px;font-size:9px;line-height:9px;height:9px;color:#e8e8e8;font-weight:400;white-space:pre;">1</div>
<div style="position:absolute;left:58px;top:632.38px;font-size:9px;line-height:9px;height:9px;color:#e8e8e8;font-weight:400;white-space:pre;">5</div>
<div style="position:absolute;left:58px;top:640.38px;font-size:9px;line-height:9px;height:9px;color:#e8e8e8;font-weight:400;white-space:pre;">0</div>
<div style="position:absolute;left:58px;top:690.38px;font-size:9px;line-height:9px;height:9px;color:#e8e8e8;font-weight:400;white-space:pre;">1</div>
<div style="position:absolute;left:58px;top:698.38px;font-size:9px;line-height:9px;height:9px;color:#e8e8e8;font-weight:400;white-space:pre;">7</div>
<div style="position:absolute;left:58px;top:706.38px;font-size:9px;line-height:9px;height:9px;color:#e8e8e8;font-weight:400;white-space:pre;">5</div>
<div style="position:absolute;left:58px;top:757.38px;font-size:9px;line-height:9px;height:9px;color:#e8e8e8;font-weight:400;white-space:pre;">2</div>
<div style="position:absolute;left:58px;top:765.38px;font-size:9px;line-height:9px;height:9px;color:#e8e8e8;font-weight:400;white-space:pre;">0</div>
<div style="position:absolute;left:58px;top:773.38px;font-size:9px;line-height:9px;height:9px;color:#e8e8e8;font-weight:400;white-space:pre;">0</div>
<div style="position:absolute;left:58px;top:823.38px;font-size:9px;line-height:9px;height:9px;color:#e8e8e8;font-weight:400;white-space:pre;">2</div>
<div style="position:absolute;left:58px;top:831.38px;font-size:9px;line-height:9px;height:9px;color:#e8e8e8;font-weight:400;white-space:pre;">2</div>
<div style="position:absolute;left:58px;top:839.38px;font-size:9px;line-height:9px;height:9px;color:#e8e8e8;font-weight:400;white-space:pre;">5</div>
<div style="position:absolute;left:58px;top:889.38px;font-size:9px;line-height:9px;height:9px;color:#e8e8e8;font-weight:400;white-space:pre;">2</div>
<div style="position:absolute;left:58px;top:897.38px;font-size:9px;line-height:9px;height:9px;color:#e8e8e8;font-weight:400;white-space:pre;">5</div>
<div style="position:absolute;left:58px;top:905.38px;font-size:9px;line-height:9px;height:9px;color:#e8e8e8;font-weight:400;white-space:pre;">0</div>
<div style="position:absolute;left:58px;top:955.38px;font-size:9px;line-height:9px;height:9px;color:#e8e8e8;font-weight:400;white-space:pre;">2</div>
<div style="position:absolute;left:58px;top:963.38px;font-size:9px;line-height:9px;height:9px;color:#e8e8e8;font-weight:400;white-space:pre;">7</div>
<div style="position:absolute;left:58px;top:971.38px;font-size:9px;line-height:9px;height:9px;color:#e8e8e8;font-weight:400;white-space:pre;">5</div>
<svg style="position:absolute;left:1348px;top:115px;" width="12" height="7" viewBox="0 0 12 7"><path d="M0.5 0.5H10.5L5.5 6.5Z" fill="#f4f4f4"/></svg>
<svg style="position:absolute;left:63px;top:803px;" width="7" height="11" viewBox="0 0 7 11"><path d="M0.5 0.5V10.5L6 5.5Z" fill="#f4f4f4"/></svg>
<div style="position:absolute;left:1433px;top:104px;width:398px;height:908px;background:#3c3c3c;"></div>
<div style="position:absolute;left:1432px;top:104px;width:399px;height:34px;background:#323232;"></div>
<div style="position:absolute;left:1432px;top:138px;width:399px;height:1px;background:#262626;"></div>
<svg style="position:absolute;left:1433px;top:113px;" width="14" height="15" viewBox="0 0 14 15"><path d="M1.5 0v15" stroke="#f2f2f2" stroke-width="1"/><rect x="4" y="1" width="6" height="3" fill="#f2f2f2"/><rect x="4" y="6" width="9.5" height="3" fill="#f2f2f2"/><rect x="4" y="11" width="6" height="3" fill="#f2f2f2"/></svg>
<div style="position:absolute;left:1449px;top:114.15px;font-size:14px;line-height:14px;height:14px;color:#f0f0f0;font-weight:400;white-space:pre;transform:scaleX(1.0939);transform-origin:0 0;">Aligner et distribuer (Maj+Ctrl+A)</div>
<svg style="position:absolute;left:1770px;top:111px;" width="12" height="12" viewBox="0 0 12 12"><rect x=".6" y=".6" width="10.8" height="10.8" rx="2" fill="none" stroke="#a0a0a0" stroke-width="1.1"/><path d="M3 6l5-3.3v6.6z" fill="#a0a0a0"/></svg>
<svg style="position:absolute;left:1806px;top:111px;" width="12" height="12" viewBox="0 0 12 12"><rect x=".6" y=".6" width="10.8" height="10.8" rx="2" fill="none" stroke="#a0a0a0" stroke-width="1.1"/><path d="M3.3 3.3l5.4 5.4M8.7 3.3l-5.4 5.4" stroke="#a0a0a0" stroke-width="1.8"/></svg>
<div style="position:absolute;left:1433px;top:139px;width:398px;height:447px;background:#313131;"></div>
<div style="position:absolute;left:1433px;top:586px;width:398px;height:1px;background:#262626;"></div>
<div style="position:absolute;left:1436px;top:144.15px;font-size:14px;line-height:14px;height:14px;color:#f4f4f4;font-weight:700;white-space:pre;transform:scaleX(1.0781);transform-origin:0 0;">Aligner</div>
<svg style="position:absolute;left:1454px;top:172px;" width="24" height="24" viewBox="0 0 24 24"><rect x="1.5" y="1.5" width="21" height="21" fill="none" stroke="#f2f2f2" stroke-width="1.6" stroke-dasharray="1.6 2.1"/><rect x="7" y="7" width="10" height="10" fill="#f2f2f2"/></svg>
<div style="position:absolute;left:1500px;top:178.15px;font-size:14px;line-height:14px;height:14px;color:#eeeeee;font-weight:400;white-space:pre;transform:scaleX(1.0378);transform-origin:0 0;">Relativement à :</div>
<div style="position:absolute;left:1610px;top:164px;width:172px;height:41px;background:#464646;border:1px solid #2c2c2c;border-radius:5px;box-sizing:border-box;"></div>
<div style="position:absolute;left:1621px;top:179.15px;font-size:14px;line-height:14px;height:14px;color:#eeeeee;font-weight:400;white-space:pre;transform:scaleX(1.0676);transform-origin:0 0;">Zone de sélection</div>
<svg style="position:absolute;left:1759px;top:181px;" width="12" height="7" viewBox="0 0 12 7"><path d="M1 1h10l-5 5z" fill="#eeeeee"/></svg>
<svg style="position:absolute;left:1793px;top:172px;" width="24" height="24" viewBox="0 0 24 24"><path d="M1.5 1v22M22.5 1v22" stroke="#f2f2f2" stroke-width="1.6"/><rect x="8" y="3" width="11" height="4.5" fill="#f2f2f2"/><rect x="6" y="10" width="11" height="3.5" fill="#f2f2f2"/><rect x="3.5" y="16" width="11" height="6" fill="#f2f2f2"/></svg>
<svg style="position:absolute;left:1573px;top:220px;" width="24" height="24" viewBox="0 0 24 24"><path d="M17.5 1v23" stroke="#f2f2f2" stroke-width="1.5"/><rect x="19" y="1" width="4" height="4" fill="#f2f2f2"/><rect x="1" y="5" width="15" height="4" fill="#f2f2f2"/><rect x="6" y="11" width="10" height="3" fill="#f2f2f2"/><rect x="3" y="16" width="13" height="4" fill="#f2f2f2"/></svg>
<svg style="position:absolute;left:1617px;top:220px;" width="24" height="24" viewBox="0 0 24 24"><path d="M1.5 1v23" stroke="#f2f2f2" stroke-width="1.5"/><rect x="4" y="1" width="15" height="5" fill="#f2f2f2"/><rect x="4" y="8" width="10" height="3" fill="#f2f2f2"/><rect x="4" y="13" width="13" height="4" fill="#f2f2f2"/><path d="M5 21.5h10" stroke="#f2f2f2" stroke-width="1.4"/><path d="M3.5 21.5l3-2.5v5z" fill="#f2f2f2"/></svg>
<svg style="position:absolute;left:1661px;top:220px;" width="24" height="24" viewBox="0 0 24 24"><path d="M12 1v23" stroke="#f2f2f2" stroke-width="1.5"/><rect x="3" y="1" width="7.5" height="4" fill="#f2f2f2"/><rect x="13.5" y="1" width="7.5" height="4" fill="#f2f2f2"/><rect x="5" y="8" width="5.5" height="3" fill="#f2f2f2"/><rect x="13.5" y="8" width="5.5" height="3" fill="#f2f2f2"/><rect x="4" y="13" width="6.5" height="4" fill="#f2f2f2"/><rect x="13.5" y="13" width="6.5" height="4" fill="#f2f2f2"/><path d="M0 21.5h8M16 21.5h8" stroke="#f2f2f2" stroke-width="1.4"/><path d="M10.5 21.5l-3-2.5v5zM13.5 21.5l3-2.5v5z" fill="#f2f2f2"/></svg>
<svg style="position:absolute;left:1705px;top:220px;" width="24" height="24" viewBox="0 0 24 24"><path d="M19.5 1v23" stroke="#f2f2f2" stroke-width="1.5"/><rect x="1" y="1" width="17" height="4.5" fill="#f2f2f2"/><rect x="7" y="8" width="11" height="3" fill="#f2f2f2"/><rect x="3" y="13" width="15" height="4" fill="#f2f2f2"/><path d="M3 21.5h13" stroke="#f2f2f2" stroke-width="1.4"/><path d="M18 21.5l-3-2.5v5z" fill="#f2f2f2"/></svg>
<svg style="position:absolute;left:1749px;top:220px;" width="24" height="24" viewBox="0 0 24 24"><path d="M6.5 1v23" stroke="#f2f2f2" stroke-width="1.5"/><rect x="1" y="1" width="4" height="4" fill="#f2f2f2"/><rect x="8" y="5" width="16" height="4" fill="#f2f2f2"/><rect x="8" y="11" width="10" height="3" fill="#f2f2f2"/><rect x="8" y="16" width="13" height="4" fill="#f2f2f2"/></svg>
<svg style="position:absolute;left:1793px;top:220px;" width="24" height="24" viewBox="0 0 24 24"><path d="M3.5 0v21.5q0 2-1.8 2.5" stroke="#f2f2f2" stroke-width="1.3" fill="none"/><text x="8" y="8.5" font-family="Liberation Serif" font-size="13" font-weight="700" fill="#f2f2f2">a</text><text x="3.5" y="19" font-family="Liberation Serif" font-style="italic" font-size="20" fill="#f2f2f2">y</text></svg>
<svg style="position:absolute;left:1573px;top:254px;" width="24" height="24" viewBox="0 0 24 24"><path d="M1 18.5h22" stroke="#f2f2f2" stroke-width="1.5"/><rect x="19" y="20" width="4" height="4" fill="#f2f2f2"/><rect x="4" y="2" width="4" height="15" fill="#f2f2f2"/><rect x="10" y="6" width="3" height="11" fill="#f2f2f2"/><rect x="15" y="1" width="4" height="16" fill="#f2f2f2"/></svg>
<svg style="position:absolute;left:1617px;top:254px;" width="24" height="24" viewBox="0 0 24 24"><path d="M1 2.5h23" stroke="#f2f2f2" stroke-width="1.5"/><rect x="8" y="4" width="5" height="19" fill="#f2f2f2"/><rect x="15" y="4" width="3" height="12" fill="#f2f2f2"/><rect x="20" y="4" width="4" height="16" fill="#f2f2f2"/><path d="M3 17V6" stroke="#f2f2f2" stroke-width="1.4"/><path d="M3 4l-2.5 3h5z" fill="#f2f2f2"/></svg>
<svg style="position:absolute;left:1661px;top:254px;" width="24" height="24" viewBox="0 0 24 24"><path d="M0 12h24" stroke="#f2f2f2" stroke-width="1.5"/><rect x="9" y="3" width="5" height="7.5" fill="#f2f2f2"/><rect x="16" y="6" width="3" height="4.5" fill="#f2f2f2"/><rect x="20" y="4" width="4" height="6.5" fill="#f2f2f2"/><rect x="9" y="13.5" width="5" height="7" fill="#f2f2f2"/><rect x="16" y="13.5" width="3" height="4" fill="#f2f2f2"/><rect x="20" y="13.5" width="4" height="6" fill="#f2f2f2"/><path d="M3 0v8M3 16v8" stroke="#f2f2f2" stroke-width="1.4"/><path d="M3 10l-2.5-3h5zM3 14l-2.5 3h5z" fill="#f2f2f2"/></svg>
<svg style="position:absolute;left:1705px;top:254px;" width="24" height="24" viewBox="0 0 24 24"><path d="M0 21.5h23" stroke="#f2f2f2" stroke-width="1.5"/><rect x="8" y="2" width="5" height="18" fill="#f2f2f2"/><rect x="15" y="8" width="3" height="12" fill="#f2f2f2"/><rect x="20" y="4" width="3" height="16" fill="#f2f2f2"/><path d="M3 3v14" stroke="#f2f2f2" stroke-width="1.4"/><path d="M3 19l-2.5-3h5z" fill="#f2f2f2"/></svg>
<svg style="position:absolute;left:1749px;top:254px;" width="24" height="24" viewBox="0 0 24 24"><path d="M0 6.5h24" stroke="#f2f2f2" stroke-width="1.5"/><rect x="20" y="1" width="4" height="4" fill="#f2f2f2"/><rect x="4" y="8" width="4" height="14" fill="#f2f2f2"/><rect x="10" y="8" width="3" height="9" fill="#f2f2f2"/><rect x="15" y="8" width="4" height="16" fill="#f2f2f2"/></svg>
<svg style="position:absolute;left:1793px;top:254px;" width="24" height="24" viewBox="0 0 24 24"><path d="M0 15.5h24" stroke="#f2f2f2" stroke-width="1.3"/><text x="-1" y="15" font-family="Liberation Serif" font-style="italic" font-size="19" fill="#f2f2f2">y</text><text x="11.5" y="15" font-family="Liberation Serif" font-size="18" font-weight="700" fill="#f2f2f2">a</text></svg>
<div style="position:absolute;left:1436px;top:298.15px;font-size:14px;line-height:14px;height:14px;color:#f4f4f4;font-weight:700;white-space:pre;transform:scaleX(1.0737);transform-origin:0 0;">Distribuer</div>
<svg style="position:absolute;left:1617px;top:322px;" width="24" height="24" viewBox="0 0 24 24"><path d="M1.5 0v24M12.5 0v12" stroke="#f2f2f2" stroke-width="1.3"/><path d="M3 3.5h8" stroke="#f2f2f2" stroke-width="1"/><path d="M2.5 3.5l2-1.5v3zM11.5 3.5l-2-1.5v3z" fill="#f2f2f2"/><rect x="0.8" y="9" width="6" height="15" fill="#f2f2f2"/><rect x="13" y="9" width="4.5" height="9" fill="#f2f2f2"/></svg>
<svg style="position:absolute;left:1661px;top:322px;" width="24" height="24" viewBox="0 0 24 24"><path d="M4.5 0v11M15.5 0v11" stroke="#f2f2f2" stroke-width="1.3"/><path d="M6 3.5h8" stroke="#f2f2f2" stroke-width="1"/><path d="M5.5 3.5l2-1.5v3zM14.5 3.5l-2-1.5v3z" fill="#f2f2f2"/><rect x="1" y="9" width="7" height="15" fill="#f2f2f2"/><rect x="13" y="9" width="5" height="9" fill="#f2f2f2"/><rect x="4" y="9" width="1" height="4" fill="#313131"/><rect x="15" y="9" width="1" height="3" fill="#313131"/></svg>
<svg style="position:absolute;left:1705px;top:322px;" width="24" height="24" viewBox="0 0 24 24"><path d="M6.5 0v11M18.5 0v24" stroke="#f2f2f2" stroke-width="1.3"/><path d="M8 3.5h9" stroke="#f2f2f2" stroke-width="1"/><path d="M7.5 3.5l2-1.5v3zM17.5 3.5l-2-1.5v3z" fill="#f2f2f2"/><rect x="0" y="9" width="6.5" height="15" fill="#f2f2f2"/><rect x="12" y="9" width="5.5" height="9" fill="#f2f2f2"/></svg>
<svg style="position:absolute;left:1749px;top:322px;" width="24" height="24" viewBox="0 0 24 24"><path d="M3.5 0v24M11.5 0v24M21 0v24" stroke="#f2f2f2" stroke-width="1.3"/><rect x="0" y="9" width="3" height="15" fill="#f2f2f2"/><rect x="9" y="9" width="2" height="15" fill="#f2f2f2"/><rect x="12" y="9" width="4" height="15" fill="#f2f2f2"/><rect x="22" y="9" width="2" height="8" fill="#f2f2f2"/><path d="M4.5 2.5h6M12.5 2.5h8" stroke="#f2f2f2" stroke-width=".9"/></svg>
<svg style="position:absolute;left:1793px;top:322px;" width="24" height="24" viewBox="0 0 24 24"><path d="M1.5 0v24M14.5 0v12" stroke="#f2f2f2" stroke-width="1.3"/><path d="M3 3.5h10" stroke="#f2f2f2" stroke-width="1"/><path d="M2.5 3.5l2-1.5v3zM13.5 3.5l-2-1.5v3z" fill="#f2f2f2"/><text x="2" y="17" font-family="Liberation Sans" font-weight="700" font-size="11" fill="#f2f2f2">a</text><text x="12" y="19" font-family="Liberation Serif" font-style="italic" font-size="14" fill="#f2f2f2">y</text></svg>
<svg style="position:absolute;left:1617px;top:356px;" width="24" height="24" viewBox="0 0 24 24"><path d="M0 3.5h24M0 16.5h24" stroke="#f2f2f2" stroke-width="1.4"/><rect x="9" y="4" width="10" height="6" fill="#f2f2f2"/><rect x="9" y="17" width="15" height="7" fill="#f2f2f2"/><path d="M4 6v9" stroke="#f2f2f2" stroke-width="1.2"/><path d="M4 5l-2 2.5h4zM4 16l-2-2.5h4z" fill="#f2f2f2"/></svg>
<svg style="position:absolute;left:1661px;top:356px;" width="24" height="24" viewBox="0 0 24 24"><path d="M0 2.5h14M0 15.5h14" stroke="#f2f2f2" stroke-width="1.4"/><rect x="13" y="0" width="6" height="5" fill="#f2f2f2"/><rect x="10" y="11" width="14" height="7" fill="#f2f2f2"/><path d="M4 4v10" stroke="#f2f2f2" stroke-width="1.2"/><path d="M4 3.5l-2 2.5h4zM4 15l-2-2.5h4z" fill="#f2f2f2"/></svg>
<svg style="position:absolute;left:1705px;top:356px;" width="24" height="24" viewBox="0 0 24 24"><path d="M0 6.5h24M0 19.5h24" stroke="#f2f2f2" stroke-width="1.4"/><rect x="9" y="2" width="9" height="4" fill="#f2f2f2"/><rect x="9" y="13" width="15" height="6" fill="#f2f2f2"/><path d="M4 8v10" stroke="#f2f2f2" stroke-width="1.2"/><path d="M4 7.5l-2 2.5h4zM4 19l-2-2.5h4z" fill="#f2f2f2"/></svg>
<svg style="position:absolute;left:1749px;top:356px;" width="24" height="24" viewBox="0 0 24 24"><path d="M0 3.5h24M0 12.5h24M0 20.5h24" stroke="#f2f2f2" stroke-width="1.3"/><rect x="9" y="0" width="11" height="3" fill="#f2f2f2"/><rect x="0" y="9" width="24" height="3" fill="#f2f2f2"/><rect x="9" y="13" width="15" height="3" fill="#f2f2f2"/><rect x="9" y="21" width="15" height="3" fill="#f2f2f2"/></svg>
<svg style="position:absolute;left:1793px;top:356px;" width="24" height="24" viewBox="0 0 24 24"><path d="M0 8.5h24M0 19.5h24" stroke="#f2f2f2" stroke-width="1.4"/><text x="14" y="8" font-family="Liberation Sans" font-weight="700" font-size="11" fill="#f2f2f2">a</text><text x="12" y="19" font-family="Liberation Serif" font-style="italic" font-size="14" fill="#f2f2f2">y</text><path d="M5 10v8" stroke="#f2f2f2" stroke-width="1.2"/><path d="M5 9.5l-2 2.5h4zM5 18.5l-2-2.5h4z" fill="#f2f2f2"/></svg>
<div style="position:absolute;left:1436px;top:418.15px;font-size:14px;line-height:14px;height:14px;color:#f4f4f4;font-weight:700;white-space:pre;transform:scaleX(0.9979);transform-origin:0 0;">Organiser</div>
<svg style="position:absolute;left:1573px;top:442px;" width="24" height="24" viewBox="0 0 24 24"><g fill="none" stroke="#f2f2f2" stroke-width="1"><path d="M7 2L15 3.5 14 11.5 18 18 11.5 20M14 11.5L6 11 2 6 7 2"/></g><g fill="#f2f2f2"><circle cx="7" cy="2" r="1.8"/><circle cx="15" cy="3.5" r="1.8"/><circle cx="14" cy="11.5" r="1.8"/><circle cx="6" cy="11" r="1.8"/><circle cx="2" cy="6" r="1.8"/><circle cx="18" cy="18" r="1.8"/><circle cx="11.5" cy="20" r="1.8"/></g></svg>
<svg style="position:absolute;left:1617px;top:442px;" width="24" height="24" viewBox="0 0 24 24"><rect x="3" y="0" width="9" height="9" fill="#f2f2f2"/><rect x="13" y="10" width="9" height="9" fill="#f2f2f2"/><path d="M14 3h3v3M11 13H7.5v-3" fill="none" stroke="#f2f2f2" stroke-width="1.2"/><path d="M15.5 6h3l-1.5 2zM6 10h3L7.5 8z" fill="#f2f2f2"/><path d="M2 16v7l2-1.8 1.5 2.8 1-.6-1.5-2.6h2.5z" fill="#f2f2f2"/></svg>
<svg style="position:absolute;left:1661px;top:442px;" width="24" height="24" viewBox="0 0 24 24"><rect x="3" y="0" width="9" height="9" fill="#f2f2f2"/><rect x="13" y="10" width="9" height="9" fill="#f2f2f2"/><path d="M14 3h3v3M11 13H7.5v-3" fill="none" stroke="#f2f2f2" stroke-width="1.2"/><path d="M15.5 6h3l-1.5 2zM6 10h3L7.5 8z" fill="#f2f2f2"/><path d="M3 16v8M6 15v8" stroke="#f2f2f2" stroke-width="1"/><path d="M3 15l-1.5 2h3zM6 24l-1.5-2h3z" fill="#f2f2f2"/></svg>
<svg style="position:absolute;left:1705px;top:442px;" width="24" height="24" viewBox="0 0 24 24"><rect x="3" y="0" width="9" height="9" fill="#f2f2f2"/><rect x="13" y="10" width="9" height="9" fill="#f2f2f2"/><path d="M14 3h3v3M11 13H7.5v-3" fill="none" stroke="#f2f2f2" stroke-width="1.2"/><path d="M15.5 6h3l-1.5 2zM6 10h3L7.5 8z" fill="#f2f2f2"/><circle cx="5" cy="19.5" r="3.5" fill="none" stroke="#f2f2f2" stroke-width="1" stroke-dasharray="1.3 1.2"/></svg>
<svg style="position:absolute;left:1749px;top:442px;" width="24" height="24" viewBox="0 0 24 24"><g fill="#f2f2f2"><rect x="2" y="1" width="5" height="3"/><rect x="12" y="2" width="6" height="3.5"/><rect x="7" y="6.5" width="6" height="3.5"/><rect x="16" y="9" width="6" height="3.5"/><rect x="2" y="13" width="6" height="3.5"/><rect x="10" y="16.5" width="6" height="3.5"/></g></svg>
<svg style="position:absolute;left:1793px;top:442px;" width="24" height="24" viewBox="0 0 24 24"><g fill="#f2f2f2"><rect x="16" y="2" width="6" height="5"/><rect x="2" y="9" width="6" height="5"/><rect x="16" y="16" width="6" height="5"/></g><path d="M8 10.5l7-3.5M8 12.5l7 3.5M19 8v7" stroke="#f2f2f2" stroke-width="1" stroke-dasharray="2 1"/></svg>
<div style="position:absolute;left:1436px;top:504.15px;font-size:14px;line-height:14px;height:14px;color:#f4f4f4;font-weight:700;white-space:pre;transform:scaleX(1.0528);transform-origin:0 0;">Supprimer les chevauchements</div>
<div style="position:absolute;left:1465px;top:533.15px;font-size:14px;line-height:14px;height:14px;color:#eeeeee;font-weight:400;white-space:pre;transform:scaleX(0.8943);transform-origin:0 0;">H :</div>
<div style="position:absolute;left:1486px;top:523px;width:135px;height:33px;background:#313131;border:1px solid #262626;border-radius:5px;box-sizing:border-box;"></div>
<div style="position:absolute;left:1550px;top:524px;width:1px;height:31px;background:#2b2b2b;"></div>
<div style="position:absolute;left:1586px;top:524px;width:1px;height:31px;background:#2b2b2b;"></div>
<div style="position:absolute;left:1494px;top:533.15px;font-size:14px;line-height:14px;height:14px;color:#eeeeee;font-weight:400;white-space:pre;">0,0</div>
<div style="position:absolute;left:1563px;top:540px;width:11px;height:1px;background:#eeeeee;"></div>
<div style="position:absolute;left:1598px;top:540px;width:11px;height:1px;background:#eeeeee;"></div>
<div style="position:absolute;left:1603px;top:535px;width:1px;height:11px;background:#eeeeee;"></div>
<div style="position:absolute;left:1624px;top:533.15px;font-size:14px;line-height:14px;height:14px;color:#eeeeee;font-weight:400;white-space:pre;transform:scaleX(0.9343);transform-origin:0 0;">V :</div>
<div style="position:absolute;left:1645px;top:523px;width:135px;height:33px;background:#313131;border:1px solid #262626;border-radius:5px;box-sizing:border-box;"></div>
<div style="position:absolute;left:1709px;top:524px;width:1px;height:31px;background:#2b2b2b;"></div>
<div style="position:absolute;left:1745px;top:524px;width:1px;height:31px;background:#2b2b2b;"></div>
<div style="position:absolute;left:1653px;top:533.15px;font-size:14px;line-height:14px;height:14px;color:#eeeeee;font-weight:400;white-space:pre;">0,0</div>
<div style="position:absolute;left:1722px;top:540px;width:11px;height:1px;background:#eeeeee;"></div>
<div style="position:absolute;left:1757px;top:540px;width:11px;height:1px;background:#eeeeee;"></div>
<div style="position:absolute;left:1762px;top:535px;width:1px;height:11px;background:#eeeeee;"></div>
<svg style="position:absolute;left:1794px;top:529px;" width="24" height="23" viewBox="0 0 24 23"><rect x="0" y="0" width="4" height="4" fill="#f2f2f2"/><rect x="0" y="6" width="4" height="16" fill="#f2f2f2"/><rect x="8" y="0" width="5" height="22" fill="#f2f2f2"/><rect x="17" y="0" width="6" height="22" fill="#f2f2f2"/></svg>
<div style="position:absolute;left:1433px;top:588px;width:397px;height:32px;background:#4a4a4a;border-top-left-radius:5px;border-top-right-radius:5px;"></div>
<svg style="position:absolute;left:1441px;top:595px;" width="16" height="18" viewBox="0 0 16 18"><path d="M.5 14V1.5h13" fill="none" stroke="#f2f2f2" stroke-width="1"/><path d="M15 2l1 1-6.5 9-2-1.5z" fill="#f2f2f2"/><path d="M7 11.5l2 1.5c-.5 2.5-2.5 3.5-6 4 1.5-1 2-2 2-3.5z" fill="#f2f2f2"/></svg>
<div style="position:absolute;left:1461px;top:597.15px;font-size:14px;line-height:14px;height:14px;color:#f0f0f0;font-weight:400;white-space:pre;transform:scaleX(1.0747);transform-origin:0 0;">Fond et contour (Maj+Ctrl+F)</div>
<svg style="position:absolute;left:1807px;top:600px;" width="12" height="8" viewBox="0 0 12 8"><path d="M1 7l5-5 5 5" fill="none" stroke="#f0f0f0" stroke-width="1.6"/></svg>
<div style="position:absolute;left:1433px;top:621px;width:397px;height:34px;background:#262626;"></div>
<svg style="position:absolute;left:1441px;top:628px;" width="16" height="18" viewBox="0 0 16 18"><path d="M1.5 1v16" stroke="#f2f2f2" stroke-width="1"/><rect x="4" y="2" width="7" height="3.5" fill="#f2f2f2"/><rect x="4" y="7.5" width="11" height="3.5" fill="#f2f2f2"/><rect x="4" y="13" width="7" height="3.5" fill="#f2f2f2"/></svg>
<div style="position:absolute;left:1461px;top:630.15px;font-size:14px;line-height:14px;height:14px;color:#f0f0f0;font-weight:400;white-space:pre;transform:scaleX(1.0988);transform-origin:0 0;">Aligner et distribuer (Maj+Ctrl+A)</div>
<svg style="position:absolute;left:1807px;top:633px;" width="12" height="8" viewBox="0 0 12 8"><path d="M1 7l5-5 5 5" fill="none" stroke="#f0f0f0" stroke-width="1.6"/></svg>
<div style="position:absolute;left:1433px;top:656px;width:397px;height:32px;background:#4a4a4a;border-bottom-left-radius:5px;border-bottom-right-radius:5px;"></div>
<svg style="position:absolute;left:1441px;top:663px;" width="16" height="18" viewBox="0 0 16 18"><path d="M4 3h12l-3 3H1zM4 8h12l-3 3H1zM4 13h12l-3 3H1z" fill="#f2f2f2"/></svg>
<div style="position:absolute;left:1461px;top:665.15px;font-size:14px;line-height:14px;height:14px;color:#f0f0f0;font-weight:400;white-space:pre;transform:scaleX(1.0446);transform-origin:0 0;">Calques (Maj+Ctrl+L)</div>
<svg style="position:absolute;left:1807px;top:668px;" width="12" height="8" viewBox="0 0 12 8"><path d="M1 7l5-5 5 5" fill="none" stroke="#f0f0f0" stroke-width="1.6"/></svg>
<div style="position:absolute;left:1433px;top:689px;width:398px;height:1px;background:#2e2e2e;"></div>
<div style="position:absolute;left:69px;top:121px;width:1344px;height:873px;background:#ffffff;"></div>
<div style="position:absolute;left:420px;top:226px;width:786px;height:556px;background:transparent;border:1px solid #666;box-sizing:border-box;"></div>
<div style="position:absolute;left:1206px;top:229px;width:3px;height:556px;background:#666;"></div>
<div style="position:absolute;left:423px;top:782px;width:786px;height:3px;background:#666;"></div>
<div style="position:absolute;left:1413px;top:121px;width:18px;height:873px;background:#393939;"></div>
<div style="position:absolute;left:1419px;top:344px;width:6px;height:488px;background:#adadad;border-radius:3px;"></div>
<div style="position:absolute;left:1431px;top:104px;width:2px;height:890px;background:#262626;"></div>
<div style="position:absolute;left:70px;top:994px;width:1343px;height:18px;background:#383838;"></div>
<div style="position:absolute;left:343px;top:999px;width:719px;height:6px;background:#adadad;border-radius:3px;"></div>
<svg style="position:absolute;left:0;top:0;isolation:isolate" width="1920" height="1075" viewBox="0 0 1920 1075"><path fill-rule="evenodd" fill="#00ffff" style="mix-blend-mode:multiply" d="M531 268H593V440H531Z M476 323H648V385H476Z"/><circle cx="562" cy="354" r="77.5" fill="none" stroke="#ff00ff" stroke-width="17" style="mix-blend-mode:multiply"/><polyline points="553.62,360.97 552.98,360.60 552.37,360.11 551.81,359.51 551.32,358.81 550.93,358.00 550.64,357.11 550.47,356.14 550.44,355.12 550.55,354.07 550.82,353.00 551.25,351.94 551.84,350.91 552.59,349.94 553.49,349.05 554.54,348.27 555.72,347.61 557.01,347.09 558.41,346.75 559.88,346.59 561.40,346.62 562.94,346.86 564.48,347.31 565.99,347.98 567.43,348.86 568.78,349.95 570.00,351.24 571.08,352.70 571.97,354.34 572.66,356.11 573.12,358.00 573.35,359.98 573.31,362.01 573.01,364.06 572.43,366.10 571.58,368.08 570.46,369.98 569.08,371.75 567.45,373.36 565.59,374.77 563.54,375.96 561.30,376.89 558.93,377.54 556.45,377.88 553.90,377.91 551.33,377.61 548.78,376.97 546.28,375.99 543.90,374.68 541.66,373.06 539.62,371.13 537.82,368.93 536.28,366.48 535.05,363.82 534.16,360.97 533.62,358.00 533.47,354.94 533.71,351.84 534.35,348.76 535.39,345.74 536.82,342.83 538.64,340.10 540.81,337.58 543.32,335.34 546.12,333.40 549.19,331.81 552.48,330.61 555.93,329.83 559.49,329.48 563.12,329.59 566.74,330.17 570.31,331.21 573.75,332.71 577.02,334.65 580.04,337.02 582.78,339.78 585.16,342.90 587.16,346.34 588.73,350.03 589.82,353.94 590.43,358.00 590.51,362.14 590.07,366.31 589.09,370.43 587.59,374.43 585.57,378.25 583.07,381.82 580.10,385.08 576.72,387.97 572.96,390.43 568.88,392.41 564.55,393.88 560.02,394.80 555.36,395.15 550.66,394.90 545.98,394.06 541.41,392.62 537.01,390.60 532.87,388.01 529.05,384.90 525.63,381.30 522.66,377.27 520.20,372.85 518.30,368.12 516.99,363.14 516.33,358.00 516.31,352.77 516.95,347.54 518.27,342.39 520.23,337.40 522.83,332.66 526.03,328.26 529.78,324.25 534.05,320.73 538.76,317.75 543.85,315.36 549.23,313.62 554.84,312.56 560.58,312.22 566.36,312.60 572.09,313.71 577.67,315.55 583.02,318.10 588.04,321.32 592.65,325.18 596.77,329.61 600.32,334.57 603.25,339.97 605.48,345.73 606.99,351.77 607.73,358.00 607.67,364.31 606.82,370.61 605.18,376.80 602.75,382.77 599.57,388.42 595.68,393.67" fill="none" stroke="#ffff00" stroke-width="9" stroke-linecap="round" style="mix-blend-mode:multiply"/><circle cx="820.5" cy="354.2" r="70" fill="none" stroke="#00ffff" stroke-width="16" style="mix-blend-mode:multiply"/><path fill-rule="evenodd" fill="#00ffff" style="mix-blend-mode:multiply" d="M886.26 419.96 L884.90 420.82 L883.05 421.17 L880.73 421.01 L877.94 420.35 L874.72 419.18 L871.09 417.51 L867.07 415.37 L862.69 412.76 L858.00 409.70 L853.02 406.22 L847.79 402.35 L842.36 398.10 L836.76 393.53 L831.03 388.65 L825.23 383.51 L819.38 378.15 L813.55 372.61 L807.77 366.93 L802.09 361.15 L796.55 355.32 L791.19 349.47 L786.05 343.67 L781.17 337.94 L776.60 332.34 L772.35 326.91 L768.48 321.68 L765.00 316.70 L761.94 312.01 L759.33 307.63 L757.19 303.61 L755.52 299.98 L754.35 296.76 L753.69 293.97 L753.53 291.65 L753.88 289.80 L754.74 288.44 L756.10 287.58 L757.95 287.23 L760.27 287.39 L763.06 288.05 L766.28 289.22 L769.91 290.89 L773.93 293.03 L778.31 295.64 L783.00 298.70 L787.98 302.18 L793.21 306.05 L798.64 310.30 L804.24 314.87 L809.97 319.75 L815.77 324.89 L821.62 330.25 L827.45 335.79 L833.23 341.47 L838.91 347.25 L844.45 353.08 L849.81 358.93 L854.95 364.73 L859.83 370.46 L864.40 376.06 L868.65 381.49 L872.52 386.72 L876.00 391.70 L879.06 396.39 L881.67 400.77 L883.81 404.79 L885.48 408.42 L886.65 411.64 L887.31 414.43 L887.47 416.75 L887.12 418.60 L886.26 419.96Z M886.26 288.44 L887.12 289.80 L887.47 291.65 L887.31 293.97 L886.65 296.76 L885.48 299.98 L883.81 303.61 L881.67 307.63 L879.06 312.01 L876.00 316.70 L872.52 321.68 L868.65 326.91 L864.40 332.34 L859.83 337.94 L854.95 343.67 L849.81 349.47 L844.45 355.32 L838.91 361.15 L833.23 366.93 L827.45 372.61 L821.62 378.15 L815.77 383.51 L809.97 388.65 L804.24 393.53 L798.64 398.10 L793.21 402.35 L787.98 406.22 L783.00 409.70 L778.31 412.76 L773.93 415.37 L769.91 417.51 L766.28 419.18 L763.06 420.35 L760.27 421.01 L757.95 421.17 L756.10 420.82 L754.74 419.96 L753.88 418.60 L753.53 416.75 L753.69 414.43 L754.35 411.64 L755.52 408.42 L757.19 404.79 L759.33 400.77 L761.94 396.39 L765.00 391.70 L768.48 386.72 L772.35 381.49 L776.60 376.06 L781.17 370.46 L786.05 364.73 L791.19 358.93 L796.55 353.08 L802.09 347.25 L807.77 341.47 L813.55 335.79 L819.38 330.25 L825.23 324.89 L831.03 319.75 L836.76 314.87 L842.36 310.30 L847.79 306.05 L853.02 302.18 L858.00 298.70 L862.69 295.64 L867.07 293.03 L871.09 290.89 L874.72 289.22 L877.94 288.05 L880.73 287.39 L883.05 287.23 L884.90 287.58 L886.26 288.44Z"/><path fill="#ffff00" style="mix-blend-mode:multiply" d="M750.3 284H778.6V312H750.3ZM862.6 284H890.7V312H862.6ZM750.3 396.3H778.6V424.4H750.3ZM862.6 396.3H890.7V424.4H862.6ZM778.6 312H806.5V340H778.6ZM834.4 312H862.6V340H834.4ZM778.6 368H806.5V396.3H778.6ZM834.4 368H862.6V396.3H834.4ZM806.5 340H834.4V368H806.5Z"/><path fill-rule="evenodd" fill="#ff00ff" style="mix-blend-mode:multiply" d="M907.00 354.20 L906.67 355.64 L905.69 357.07 L904.05 358.47 L901.78 359.84 L898.90 361.17 L895.41 362.45 L891.36 363.66 L886.76 364.81 L881.66 365.87 L876.10 366.84 L870.11 367.72 L863.75 368.49 L857.06 369.15 L850.08 369.70 L842.89 370.14 L835.52 370.45 L828.04 370.64 L820.50 370.70 L812.96 370.64 L805.48 370.45 L798.11 370.14 L790.92 369.70 L783.94 369.15 L777.25 368.49 L770.89 367.72 L764.90 366.84 L759.34 365.87 L754.24 364.81 L749.64 363.66 L745.59 362.45 L742.10 361.17 L739.22 359.84 L736.95 358.47 L735.31 357.07 L734.33 355.64 L734.00 354.20 L734.33 352.76 L735.31 351.33 L736.95 349.93 L739.22 348.56 L742.10 347.23 L745.59 345.95 L749.64 344.74 L754.24 343.59 L759.34 342.53 L764.90 341.56 L770.89 340.68 L777.25 339.91 L783.94 339.25 L790.92 338.70 L798.11 338.26 L805.48 337.95 L812.96 337.76 L820.50 337.70 L828.04 337.76 L835.52 337.95 L842.89 338.26 L850.08 338.70 L857.06 339.25 L863.75 339.91 L870.11 340.68 L876.10 341.56 L881.66 342.53 L886.76 343.59 L891.36 344.74 L895.41 345.95 L898.90 347.23 L901.78 348.56 L904.05 349.93 L905.69 351.33 L906.67 352.76 L907.00 354.20Z M820.50 440.70 L819.06 440.37 L817.63 439.39 L816.23 437.75 L814.86 435.48 L813.53 432.60 L812.25 429.11 L811.04 425.06 L809.89 420.46 L808.83 415.36 L807.86 409.80 L806.98 403.81 L806.21 397.45 L805.55 390.76 L805.00 383.78 L804.56 376.59 L804.25 369.22 L804.06 361.74 L804.00 354.20 L804.06 346.66 L804.25 339.18 L804.56 331.81 L805.00 324.62 L805.55 317.64 L806.21 310.95 L806.98 304.59 L807.86 298.60 L808.83 293.04 L809.89 287.94 L811.04 283.34 L812.25 279.29 L813.53 275.80 L814.86 272.92 L816.23 270.65 L817.63 269.01 L819.06 268.03 L820.50 267.70 L821.94 268.03 L823.37 269.01 L824.77 270.65 L826.14 272.92 L827.47 275.80 L828.75 279.29 L829.96 283.34 L831.11 287.94 L832.17 293.04 L833.14 298.60 L834.02 304.59 L834.79 310.95 L835.45 317.64 L836.00 324.62 L836.44 331.81 L836.75 339.18 L836.94 346.66 L837.00 354.20 L836.94 361.74 L836.75 369.22 L836.44 376.59 L836.00 383.78 L835.45 390.76 L834.79 397.45 L834.02 403.81 L833.14 409.80 L832.17 415.36 L831.11 420.46 L829.96 425.06 L828.75 429.11 L827.47 432.60 L826.14 435.48 L824.77 437.75 L823.37 439.39 L821.94 440.37 L820.50 440.70Z"/><circle cx="1077.4" cy="350.5" r="67" fill="none" stroke="#ffff00" stroke-width="21" style="mix-blend-mode:multiply"/><circle cx="1077.4" cy="350.5" r="39" fill="none" stroke="#ffff00" stroke-width="12" style="mix-blend-mode:multiply"/><path fill="#00ffff" style="mix-blend-mode:multiply" d="M1020.4 277.5H1036.7V293.7H1020.4ZM1004.2 293.7H1020.4V309.9H1004.2ZM1036.7 293.7H1052.9V309.9H1036.7ZM1020.4 309.9H1036.7V326.1H1020.4ZM1052.9 309.9H1069.2V326.1H1052.9ZM1036.7 326.1H1052.9V342.4H1036.7ZM1118.1 407.3H1134.4V423.5H1118.1ZM1134.4 391.1H1150.6V407.3H1134.4ZM1101.9 391.1H1118.1V407.3H1101.9ZM1118.1 374.9H1134.4V391.1H1118.1ZM1085.6 374.9H1101.9V391.1H1085.6ZM1101.9 358.6H1118.1V374.9H1101.9Z"/><path fill="#ff00ff" style="mix-blend-mode:multiply" d="M1118.1 277.5H1134.4V293.7H1118.1ZM1134.4 293.7H1150.6V309.9H1134.4ZM1101.9 293.7H1118.1V309.9H1101.9ZM1118.1 309.9H1134.4V326.1H1118.1ZM1085.6 309.9H1101.9V326.1H1085.6ZM1101.9 326.1H1118.1V342.4H1101.9ZM1020.4 407.3H1036.7V423.5H1020.4ZM1004.2 391.1H1020.4V407.3H1004.2ZM1036.7 391.1H1052.9V407.3H1036.7ZM1020.4 374.9H1036.7V391.1H1020.4ZM1052.9 374.9H1069.2V391.1H1052.9ZM1036.7 358.6H1052.9V374.9H1036.7Z"/><path fill="#00ffff" style="mix-blend-mode:multiply" d="M1052.9 342.4H1069.2V358.6H1052.9ZM1085.6 342.4H1101.9V358.6H1085.6ZM1069.2 326.1H1085.6V342.4H1069.2ZM1069.2 358.6H1085.6V374.9H1069.2Z"/><path fill="#ff00ff" style="mix-blend-mode:multiply" d="M1052.9 342.4H1069.2V358.6H1052.9ZM1085.6 342.4H1101.9V358.6H1085.6ZM1069.2 326.1H1085.6V342.4H1069.2ZM1069.2 358.6H1085.6V374.9H1069.2Z"/><circle cx="1079.4" cy="277.5" r="9.7" fill="#ff00ff" style="mix-blend-mode:multiply"/><circle cx="1079.4" cy="423.5" r="9.7" fill="#ff00ff" style="mix-blend-mode:multiply"/><circle cx="1006.6000000000001" cy="350.5" r="9.7" fill="#ff00ff" style="mix-blend-mode:multiply"/><circle cx="1152.6000000000001" cy="350.5" r="9.7" fill="#ff00ff" style="mix-blend-mode:multiply"/><circle cx="1077.4" cy="350.5" r="13.4" fill="none" stroke="#000" stroke-width="3.8"/><defs><clipPath id="disk4"><circle cx="551.3" cy="621.6" r="75.5"/></clipPath><clipPath id="cross4"><path clip-path="url(#disk4)" d="M538.6 540H563.9V700H538.6Z M470 608.9H630V634.3H470Z"/></clipPath></defs><path fill="#ff00ff" d="M551.3 534.6L638.3 621.6L551.3 708.6L464.29999999999995 621.6Z"/><circle cx="551.3" cy="621.6" r="75.5" fill="#00ffff" style="mix-blend-mode:multiply"/><circle cx="551.3" cy="621.6" r="50.7" fill="#00ff00"/><circle cx="551.3" cy="621.6" r="45" fill="#ffff00"/><circle cx="551.3" cy="621.6" r="30" fill="#00ff00"/><g clip-path="url(#cross4)"><g clip-path="url(#disk4)"><rect x="470" y="540" width="160" height="160" fill="#00ff00"/><circle cx="551.3" cy="621.6" r="50.7" fill="#0000ff"/><circle cx="551.3" cy="621.6" r="45" fill="#ff00ff"/><circle cx="551.3" cy="621.6" r="30" fill="#0000ff"/><circle cx="551.3" cy="621.6" r="18" fill="#ff00ff"/></g></g><rect x="538.6" y="608.9" width="25.3" height="25.4" fill="#ffff00"/><path fill-rule="evenodd" fill="#ffff00" style="mix-blend-mode:multiply" d="M745.5 577.5H778V610H745.5ZM745.5 642.5H778V675H745.5ZM778 545H810.4V577.5H778ZM778 610H810.4V642.5H778ZM778 675H810.4V707.6H778ZM810.4 577.5H842.8V610H810.4ZM810.4 642.5H842.8V675H810.4ZM842.8 545H875.2V577.5H842.8ZM842.8 610H875.2V642.5H842.8ZM842.8 675H875.2V707.6H842.8ZM875.2 577.5H907.6V610H875.2ZM875.2 642.5H907.6V675H875.2ZM756 578A22 22 0 1 0 800 578A22 22 0 1 0 756 578ZM853 578A22 22 0 1 0 897 578A22 22 0 1 0 853 578ZM756 675A22 22 0 1 0 800 675A22 22 0 1 0 756 675ZM853 675A22 22 0 1 0 897 675A22 22 0 1 0 853 675ZM789.5 611A21.5 21.5 0 1 0 832.5 611A21.5 21.5 0 1 0 789.5 611ZM820.5 642A21.5 21.5 0 1 0 863.5 642A21.5 21.5 0 1 0 820.5 642Z"/><defs><clipPath id="in48"><path d="M803.5 578.5H849.5L874.5 603.5V649.5L849.5 674.5H803.5L778.5 649.5V603.5Z"/></clipPath><clipPath id="out63"><path clip-rule="evenodd" d="M700 500H950V750H700Z M797.5 563.5H855.5L889.5 597.5V655.5L855.5 689.5H797.5L763.5 655.5V597.5Z"/></clipPath></defs><defs><clipPath id="dk74"><circle cx="826.5" cy="626.5" r="74"/></clipPath></defs><g clip-path="url(#dk74)" style="mix-blend-mode:multiply"><path fill-rule="evenodd" fill="#ff00ff" d="M752.5 626.5A74 74 0 1 0 900.5 626.5A74 74 0 1 0 752.5 626.5Z M797.5 563.5H855.5L889.5 597.5V655.5L855.5 689.5H797.5L763.5 655.5V597.5Z M756 578A22 22 0 1 0 800 578A22 22 0 1 0 756 578ZM853 578A22 22 0 1 0 897 578A22 22 0 1 0 853 578ZM756 675A22 22 0 1 0 800 675A22 22 0 1 0 756 675ZM853 675A22 22 0 1 0 897 675A22 22 0 1 0 853 675Z"/></g><path fill-rule="evenodd" fill="#0000ff" style="mix-blend-mode:multiply" d="M797.5 563.5H855.5L889.5 597.5V655.5L855.5 689.5H797.5L763.5 655.5V597.5Z M803.5 578.5H849.5L874.5 603.5V649.5L849.5 674.5H803.5L778.5 649.5V603.5Z"/><g clip-path="url(#dk74)" style="mix-blend-mode:multiply"><g clip-path="url(#out63)"><path fill="#00ffff" d="M756 578A22 22 0 1 0 800 578A22 22 0 1 0 756 578ZM853 578A22 22 0 1 0 897 578A22 22 0 1 0 853 578ZM756 675A22 22 0 1 0 800 675A22 22 0 1 0 756 675ZM853 675A22 22 0 1 0 897 675A22 22 0 1 0 853 675Z"/></g></g><path fill-rule="evenodd" fill="#ff00ff" style="mix-blend-mode:multiply" d="M806.5 586.5H846.5A20 20 0 0 1 866.5 606.5V646.5A20 20 0 0 1 846.5 666.5H806.5A20 20 0 0 1 786.5 646.5V606.5A20 20 0 0 1 806.5 586.5Z M808.5 593.5H844.5A15 15 0 0 1 859.5 608.5V644.5A15 15 0 0 1 844.5 659.5H808.5A15 15 0 0 1 793.5 644.5V608.5A15 15 0 0 1 808.5 593.5Z"/><path fill-rule="evenodd" fill="#0000ff" style="mix-blend-mode:multiply" d="M809.0 593.0H844.0L860.0 609.0V644.0L844.0 660.0H809.0L793.0 644.0V609.0Z M812.5 599.5H840.5L853.5 612.5V640.5L840.5 653.5H812.5L799.5 640.5V612.5Z"/><path fill-rule="evenodd" fill="#00ffff" style="mix-blend-mode:multiply" d="M811.5 599.5H841.5A12 12 0 0 1 853.5 611.5V641.5A12 12 0 0 1 841.5 653.5H811.5A12 12 0 0 1 799.5 641.5V611.5A12 12 0 0 1 811.5 599.5Z M813.5 603.5H839.5A10 10 0 0 1 849.5 613.5V639.5A10 10 0 0 1 839.5 649.5H813.5A10 10 0 0 1 803.5 639.5V613.5A10 10 0 0 1 813.5 603.5Z"/><path fill="#00ffff" style="mix-blend-mode:multiply" d="M1010 562H1076.3V628.8H1010Z M1076.3 628.8H1142.5V695H1076.3Z"/><path fill="#ff00ff" style="mix-blend-mode:multiply" d="M1107.3 566.3H1138.8V597.3H1107.3Z M1076.3 597.3H1107.3V628.8H1076.3Z M1014.6 659.8H1045.3V691H1014.6Z M1045.3 628.8H1076.3V659.8H1045.3Z"/><path fill-rule="evenodd" fill="#ffff00" style="mix-blend-mode:multiply" d="M1076.30 546.80 L1078.44 547.05 L1080.55 547.79 L1082.58 549.01 L1084.51 550.69 L1086.30 552.81 L1087.93 555.35 L1089.37 558.27 L1090.59 561.56 L1091.55 565.27 L1092.09 569.88 L1094.86 566.15 L1097.54 563.42 L1100.24 561.18 L1102.95 559.37 L1105.63 557.99 L1108.24 557.05 L1110.76 556.56 L1113.13 556.52 L1115.32 556.93 L1117.30 557.79 L1119.03 559.07 L1120.48 560.76 L1121.63 562.84 L1122.46 565.26 L1122.96 568.00 L1123.10 571.01 L1122.89 574.25 L1122.30 577.72 L1121.28 581.40 L1119.43 585.67 L1123.70 583.82 L1127.38 582.80 L1130.85 582.21 L1134.09 582.00 L1137.10 582.14 L1139.84 582.64 L1142.26 583.47 L1144.34 584.62 L1146.03 586.07 L1147.31 587.80 L1148.17 589.78 L1148.58 591.97 L1148.54 594.34 L1148.05 596.86 L1147.11 599.47 L1145.73 602.15 L1143.92 604.86 L1141.68 607.56 L1138.95 610.24 L1135.22 613.01 L1139.83 613.55 L1143.54 614.51 L1146.83 615.73 L1149.75 617.17 L1152.29 618.80 L1154.41 620.59 L1156.09 622.52 L1157.31 624.55 L1158.05 626.66 L1158.30 628.80 L1158.05 630.94 L1157.31 633.05 L1156.09 635.08 L1154.41 637.01 L1152.29 638.80 L1149.75 640.43 L1146.83 641.87 L1143.54 643.09 L1139.83 644.05 L1135.22 644.59 L1138.95 647.36 L1141.68 650.04 L1143.92 652.74 L1145.73 655.45 L1147.11 658.13 L1148.05 660.74 L1148.54 663.26 L1148.58 665.63 L1148.17 667.82 L1147.31 669.80 L1146.03 671.53 L1144.34 672.98 L1142.26 674.13 L1139.84 674.96 L1137.10 675.46 L1134.09 675.60 L1130.85 675.39 L1127.38 674.80 L1123.70 673.78 L1119.43 671.93 L1121.28 676.20 L1122.30 679.88 L1122.89 683.35 L1123.10 686.59 L1122.96 689.60 L1122.46 692.34 L1121.63 694.76 L1120.48 696.84 L1119.03 698.53 L1117.30 699.81 L1115.32 700.67 L1113.13 701.08 L1110.76 701.04 L1108.24 700.55 L1105.63 699.61 L1102.95 698.23 L1100.24 696.42 L1097.54 694.18 L1094.86 691.45 L1092.09 687.72 L1091.55 692.33 L1090.59 696.04 L1089.37 699.33 L1087.93 702.25 L1086.30 704.79 L1084.51 706.91 L1082.58 708.59 L1080.55 709.81 L1078.44 710.55 L1076.30 710.80 L1074.16 710.55 L1072.05 709.81 L1070.02 708.59 L1068.09 706.91 L1066.30 704.79 L1064.67 702.25 L1063.23 699.33 L1062.01 696.04 L1061.05 692.33 L1060.51 687.72 L1057.74 691.45 L1055.06 694.18 L1052.36 696.42 L1049.65 698.23 L1046.97 699.61 L1044.36 700.55 L1041.84 701.04 L1039.47 701.08 L1037.28 700.67 L1035.30 699.81 L1033.57 698.53 L1032.12 696.84 L1030.97 694.76 L1030.14 692.34 L1029.64 689.60 L1029.50 686.59 L1029.71 683.35 L1030.30 679.88 L1031.32 676.20 L1033.17 671.93 L1028.90 673.78 L1025.22 674.80 L1021.75 675.39 L1018.51 675.60 L1015.50 675.46 L1012.76 674.96 L1010.34 674.13 L1008.26 672.98 L1006.57 671.53 L1005.29 669.80 L1004.43 667.82 L1004.02 665.63 L1004.06 663.26 L1004.55 660.74 L1005.49 658.13 L1006.87 655.45 L1008.68 652.74 L1010.92 650.04 L1013.65 647.36 L1017.38 644.59 L1012.77 644.05 L1009.06 643.09 L1005.77 641.87 L1002.85 640.43 L1000.31 638.80 L998.19 637.01 L996.51 635.08 L995.29 633.05 L994.55 630.94 L994.30 628.80 L994.55 626.66 L995.29 624.55 L996.51 622.52 L998.19 620.59 L1000.31 618.80 L1002.85 617.17 L1005.77 615.73 L1009.06 614.51 L1012.77 613.55 L1017.38 613.01 L1013.65 610.24 L1010.92 607.56 L1008.68 604.86 L1006.87 602.15 L1005.49 599.47 L1004.55 596.86 L1004.06 594.34 L1004.02 591.97 L1004.43 589.78 L1005.29 587.80 L1006.57 586.07 L1008.26 584.62 L1010.34 583.47 L1012.76 582.64 L1015.50 582.14 L1018.51 582.00 L1021.75 582.21 L1025.22 582.80 L1028.90 583.82 L1033.17 585.67 L1031.32 581.40 L1030.30 577.72 L1029.71 574.25 L1029.50 571.01 L1029.64 568.00 L1030.14 565.26 L1030.97 562.84 L1032.12 560.76 L1033.57 559.07 L1035.30 557.79 L1037.28 556.93 L1039.47 556.52 L1041.84 556.56 L1044.36 557.05 L1046.97 557.99 L1049.65 559.37 L1052.36 561.18 L1055.06 563.42 L1057.74 566.15 L1060.51 569.88 L1061.05 565.27 L1062.01 561.56 L1063.23 558.27 L1064.67 555.35 L1066.30 552.81 L1068.09 550.69 L1070.02 549.01 L1072.05 547.79 L1074.16 547.05 L1076.30 546.80Z M1076.30 594.80 L1077.19 594.94 L1078.05 595.35 L1078.88 596.02 L1079.65 596.95 L1080.34 598.13 L1080.94 599.53 L1081.43 601.14 L1081.79 602.95 L1082.01 605.00 L1081.99 607.55 L1083.25 605.33 L1084.46 603.67 L1085.69 602.28 L1086.92 601.13 L1088.14 600.22 L1089.32 599.55 L1090.45 599.12 L1091.51 598.95 L1092.46 599.03 L1093.30 599.36 L1094.00 599.92 L1094.54 600.71 L1094.92 601.70 L1095.12 602.89 L1095.13 604.26 L1094.95 605.77 L1094.57 607.41 L1093.98 609.16 L1093.15 611.04 L1091.86 613.24 L1094.06 611.95 L1095.94 611.12 L1097.69 610.53 L1099.33 610.15 L1100.84 609.97 L1102.21 609.98 L1103.40 610.18 L1104.39 610.56 L1105.18 611.10 L1105.74 611.80 L1106.07 612.64 L1106.15 613.59 L1105.98 614.65 L1105.55 615.78 L1104.88 616.96 L1103.97 618.18 L1102.82 619.41 L1101.43 620.64 L1099.77 621.85 L1097.55 623.11 L1100.10 623.09 L1102.15 623.31 L1103.96 623.67 L1105.57 624.16 L1106.97 624.76 L1108.15 625.45 L1109.08 626.22 L1109.75 627.05 L1110.16 627.91 L1110.30 628.80 L1110.16 629.69 L1109.75 630.55 L1109.08 631.38 L1108.15 632.15 L1106.97 632.84 L1105.57 633.44 L1103.96 633.93 L1102.15 634.29 L1100.10 634.51 L1097.55 634.49 L1099.77 635.75 L1101.43 636.96 L1102.82 638.19 L1103.97 639.42 L1104.88 640.64 L1105.55 641.82 L1105.98 642.95 L1106.15 644.01 L1106.07 644.96 L1105.74 645.80 L1105.18 646.50 L1104.39 647.04 L1103.40 647.42 L1102.21 647.62 L1100.84 647.63 L1099.33 647.45 L1097.69 647.07 L1095.94 646.48 L1094.06 645.65 L1091.86 644.36 L1093.15 646.56 L1093.98 648.44 L1094.57 650.19 L1094.95 651.83 L1095.13 653.34 L1095.12 654.71 L1094.92 655.90 L1094.54 656.89 L1094.00 657.68 L1093.30 658.24 L1092.46 658.57 L1091.51 658.65 L1090.45 658.48 L1089.32 658.05 L1088.14 657.38 L1086.92 656.47 L1085.69 655.32 L1084.46 653.93 L1083.25 652.27 L1081.99 650.05 L1082.01 652.60 L1081.79 654.65 L1081.43 656.46 L1080.94 658.07 L1080.34 659.47 L1079.65 660.65 L1078.88 661.58 L1078.05 662.25 L1077.19 662.66 L1076.30 662.80 L1075.41 662.66 L1074.55 662.25 L1073.72 661.58 L1072.95 660.65 L1072.26 659.47 L1071.66 658.07 L1071.17 656.46 L1070.81 654.65 L1070.59 652.60 L1070.61 650.05 L1069.35 652.27 L1068.14 653.93 L1066.91 655.32 L1065.68 656.47 L1064.46 657.38 L1063.28 658.05 L1062.15 658.48 L1061.09 658.65 L1060.14 658.57 L1059.30 658.24 L1058.60 657.68 L1058.06 656.89 L1057.68 655.90 L1057.48 654.71 L1057.47 653.34 L1057.65 651.83 L1058.03 650.19 L1058.62 648.44 L1059.45 646.56 L1060.74 644.36 L1058.54 645.65 L1056.66 646.48 L1054.91 647.07 L1053.27 647.45 L1051.76 647.63 L1050.39 647.62 L1049.20 647.42 L1048.21 647.04 L1047.42 646.50 L1046.86 645.80 L1046.53 644.96 L1046.45 644.01 L1046.62 642.95 L1047.05 641.82 L1047.72 640.64 L1048.63 639.42 L1049.78 638.19 L1051.17 636.96 L1052.83 635.75 L1055.05 634.49 L1052.50 634.51 L1050.45 634.29 L1048.64 633.93 L1047.03 633.44 L1045.63 632.84 L1044.45 632.15 L1043.52 631.38 L1042.85 630.55 L1042.44 629.69 L1042.30 628.80 L1042.44 627.91 L1042.85 627.05 L1043.52 626.22 L1044.45 625.45 L1045.63 624.76 L1047.03 624.16 L1048.64 623.67 L1050.45 623.31 L1052.50 623.09 L1055.05 623.11 L1052.83 621.85 L1051.17 620.64 L1049.78 619.41 L1048.63 618.18 L1047.72 616.96 L1047.05 615.78 L1046.62 614.65 L1046.45 613.59 L1046.53 612.64 L1046.86 611.80 L1047.42 611.10 L1048.21 610.56 L1049.20 610.18 L1050.39 609.98 L1051.76 609.97 L1053.27 610.15 L1054.91 610.53 L1056.66 611.12 L1058.54 611.95 L1060.74 613.24 L1059.45 611.04 L1058.62 609.16 L1058.03 607.41 L1057.65 605.77 L1057.47 604.26 L1057.48 602.89 L1057.68 601.70 L1058.06 600.71 L1058.60 599.92 L1059.30 599.36 L1060.14 599.03 L1061.09 598.95 L1062.15 599.12 L1063.28 599.55 L1064.46 600.22 L1065.68 601.13 L1066.91 602.28 L1068.14 603.67 L1069.35 605.33 L1070.61 607.55 L1070.59 605.00 L1070.81 602.95 L1071.17 601.14 L1071.66 599.53 L1072.26 598.13 L1072.95 596.95 L1073.72 596.02 L1074.55 595.35 L1075.41 594.94 L1076.30 594.80Z"/><path fill="#ff00ff" style="mix-blend-mode:multiply" d="M1076.30 594.80 L1077.19 594.94 L1078.05 595.35 L1078.88 596.02 L1079.65 596.95 L1080.34 598.13 L1080.94 599.53 L1081.43 601.14 L1081.79 602.95 L1082.01 605.00 L1081.99 607.55 L1083.25 605.33 L1084.46 603.67 L1085.69 602.28 L1086.92 601.13 L1088.14 600.22 L1089.32 599.55 L1090.45 599.12 L1091.51 598.95 L1092.46 599.03 L1093.30 599.36 L1094.00 599.92 L1094.54 600.71 L1094.92 601.70 L1095.12 602.89 L1095.13 604.26 L1094.95 605.77 L1094.57 607.41 L1093.98 609.16 L1093.15 611.04 L1091.86 613.24 L1094.06 611.95 L1095.94 611.12 L1097.69 610.53 L1099.33 610.15 L1100.84 609.97 L1102.21 609.98 L1103.40 610.18 L1104.39 610.56 L1105.18 611.10 L1105.74 611.80 L1106.07 612.64 L1106.15 613.59 L1105.98 614.65 L1105.55 615.78 L1104.88 616.96 L1103.97 618.18 L1102.82 619.41 L1101.43 620.64 L1099.77 621.85 L1097.55 623.11 L1100.10 623.09 L1102.15 623.31 L1103.96 623.67 L1105.57 624.16 L1106.97 624.76 L1108.15 625.45 L1109.08 626.22 L1109.75 627.05 L1110.16 627.91 L1110.30 628.80 L1110.16 629.69 L1109.75 630.55 L1109.08 631.38 L1108.15 632.15 L1106.97 632.84 L1105.57 633.44 L1103.96 633.93 L1102.15 634.29 L1100.10 634.51 L1097.55 634.49 L1099.77 635.75 L1101.43 636.96 L1102.82 638.19 L1103.97 639.42 L1104.88 640.64 L1105.55 641.82 L1105.98 642.95 L1106.15 644.01 L1106.07 644.96 L1105.74 645.80 L1105.18 646.50 L1104.39 647.04 L1103.40 647.42 L1102.21 647.62 L1100.84 647.63 L1099.33 647.45 L1097.69 647.07 L1095.94 646.48 L1094.06 645.65 L1091.86 644.36 L1093.15 646.56 L1093.98 648.44 L1094.57 650.19 L1094.95 651.83 L1095.13 653.34 L1095.12 654.71 L1094.92 655.90 L1094.54 656.89 L1094.00 657.68 L1093.30 658.24 L1092.46 658.57 L1091.51 658.65 L1090.45 658.48 L1089.32 658.05 L1088.14 657.38 L1086.92 656.47 L1085.69 655.32 L1084.46 653.93 L1083.25 652.27 L1081.99 650.05 L1082.01 652.60 L1081.79 654.65 L1081.43 656.46 L1080.94 658.07 L1080.34 659.47 L1079.65 660.65 L1078.88 661.58 L1078.05 662.25 L1077.19 662.66 L1076.30 662.80 L1075.41 662.66 L1074.55 662.25 L1073.72 661.58 L1072.95 660.65 L1072.26 659.47 L1071.66 658.07 L1071.17 656.46 L1070.81 654.65 L1070.59 652.60 L1070.61 650.05 L1069.35 652.27 L1068.14 653.93 L1066.91 655.32 L1065.68 656.47 L1064.46 657.38 L1063.28 658.05 L1062.15 658.48 L1061.09 658.65 L1060.14 658.57 L1059.30 658.24 L1058.60 657.68 L1058.06 656.89 L1057.68 655.90 L1057.48 654.71 L1057.47 653.34 L1057.65 651.83 L1058.03 650.19 L1058.62 648.44 L1059.45 646.56 L1060.74 644.36 L1058.54 645.65 L1056.66 646.48 L1054.91 647.07 L1053.27 647.45 L1051.76 647.63 L1050.39 647.62 L1049.20 647.42 L1048.21 647.04 L1047.42 646.50 L1046.86 645.80 L1046.53 644.96 L1046.45 644.01 L1046.62 642.95 L1047.05 641.82 L1047.72 640.64 L1048.63 639.42 L1049.78 638.19 L1051.17 636.96 L1052.83 635.75 L1055.05 634.49 L1052.50 634.51 L1050.45 634.29 L1048.64 633.93 L1047.03 633.44 L1045.63 632.84 L1044.45 632.15 L1043.52 631.38 L1042.85 630.55 L1042.44 629.69 L1042.30 628.80 L1042.44 627.91 L1042.85 627.05 L1043.52 626.22 L1044.45 625.45 L1045.63 624.76 L1047.03 624.16 L1048.64 623.67 L1050.45 623.31 L1052.50 623.09 L1055.05 623.11 L1052.83 621.85 L1051.17 620.64 L1049.78 619.41 L1048.63 618.18 L1047.72 616.96 L1047.05 615.78 L1046.62 614.65 L1046.45 613.59 L1046.53 612.64 L1046.86 611.80 L1047.42 611.10 L1048.21 610.56 L1049.20 610.18 L1050.39 609.98 L1051.76 609.97 L1053.27 610.15 L1054.91 610.53 L1056.66 611.12 L1058.54 611.95 L1060.74 613.24 L1059.45 611.04 L1058.62 609.16 L1058.03 607.41 L1057.65 605.77 L1057.47 604.26 L1057.48 602.89 L1057.68 601.70 L1058.06 600.71 L1058.60 599.92 L1059.30 599.36 L1060.14 599.03 L1061.09 598.95 L1062.15 599.12 L1063.28 599.55 L1064.46 600.22 L1065.68 601.13 L1066.91 602.28 L1068.14 603.67 L1069.35 605.33 L1070.61 607.55 L1070.59 605.00 L1070.81 602.95 L1071.17 601.14 L1071.66 599.53 L1072.26 598.13 L1072.95 596.95 L1073.72 596.02 L1074.55 595.35 L1075.41 594.94 L1076.30 594.80Z"/></svg>
<div style="position:absolute;left:0px;top:1012px;width:1884px;height:21px;background:#fff;"></div>
<svg style="position:absolute;left:0px;top:1012px;" width="19" height="21" viewBox="0 0 19 21"><rect width="19" height="21" fill="#fff"/><path d="M0 0L19 21M19 0L0 21" stroke="#800000" stroke-width="1.6"/></svg>
<svg style="position:absolute;left:0px;top:1012px;" width="1884" height="21" viewBox="0 0 1884 21"><rect x="19" y="0" width="19" height="21" fill="#000000"/><rect x="38" y="0" width="19" height="21" fill="#1a1a1a"/><rect x="57" y="0" width="19" height="21" fill="#333333"/><rect x="76" y="0" width="19" height="21" fill="#4d4d4d"/><rect x="95" y="0" width="19" height="21" fill="#666666"/><rect x="114" y="0" width="19" height="21" fill="#808080"/><rect x="133" y="0" width="19" height="21" fill="#999999"/><rect x="152" y="0" width="19" height="21" fill="#b3b3b3"/><rect x="171" y="0" width="19" height="21" fill="#cccccc"/><rect x="190" y="0" width="19" height="21" fill="#e6e6e6"/><rect x="209" y="0" width="19" height="21" fill="#ececec"/><rect x="228" y="0" width="19" height="21" fill="#f2f2f2"/><rect x="247" y="0" width="19" height="21" fill="#f8f8f8"/><rect x="266" y="0" width="19" height="21" fill="#ffffff"/><rect x="285" y="0" width="19" height="21" fill="#800000"/><rect x="304" y="0" width="19" height="21" fill="#ff0000"/><rect x="323" y="0" width="19" height="21" fill="#808000"/><rect x="342" y="0" width="19" height="21" fill="#ffff00"/><rect x="361" y="0" width="19" height="21" fill="#008000"/><rect x="380" y="0" width="19" height="21" fill="#00ff00"/><rect x="399" y="0" width="19" height="21" fill="#008080"/><rect x="418" y="0" width="19" height="21" fill="#00ffff"/><rect x="437" y="0" width="19" height="21" fill="#000080"/><rect x="456" y="0" width="19" height="21" fill="#0000ff"/><rect x="475" y="0" width="19" height="21" fill="#800080"/><rect x="494" y="0" width="19" height="21" fill="#ff00ff"/><rect x="513" y="0" width="19" height="21" fill="#2b0000"/><rect x="532" y="0" width="19" height="21" fill="#550000"/><rect x="551" y="0" width="19" height="21" fill="#800000"/><rect x="570" y="0" width="19" height="21" fill="#aa0000"/><rect x="589" y="0" width="19" height="21" fill="#d40000"/><rect x="608" y="0" width="19" height="21" fill="#ff0000"/><rect x="627" y="0" width="19" height="21" fill="#ff2a2a"/><rect x="646" y="0" width="19" height="21" fill="#ff5555"/><rect x="665" y="0" width="19" height="21" fill="#ff8080"/><rect x="684" y="0" width="19" height="21" fill="#ffaaaa"/><rect x="703" y="0" width="19" height="21" fill="#ffd5d5"/><rect x="722" y="0" width="19" height="21" fill="#280b0b"/><rect x="741" y="0" width="19" height="21" fill="#501616"/><rect x="760" y="0" width="19" height="21" fill="#782121"/><rect x="779" y="0" width="19" height="21" fill="#a02c2c"/><rect x="798" y="0" width="19" height="21" fill="#c83737"/><rect x="817" y="0" width="19" height="21" fill="#d35f5f"/><rect x="836" y="0" width="19" height="21" fill="#de8787"/><rect x="855" y="0" width="19" height="21" fill="#e9afaf"/><rect x="874" y="0" width="19" height="21" fill="#f4d7d7"/><rect x="893" y="0" width="19" height="21" fill="#241c1c"/><rect x="912" y="0" width="19" height="21" fill="#483737"/><rect x="931" y="0" width="19" height="21" fill="#6c5353"/><rect x="950" y="0" width="19" height="21" fill="#916f6f"/><rect x="969" y="0" width="19" height="21" fill="#ac9393"/><rect x="988" y="0" width="19" height="21" fill="#c8b7b7"/><rect x="1007" y="0" width="19" height="21" fill="#e3dbdb"/><rect x="1026" y="0" width="19" height="21" fill="#2b1100"/><rect x="1045" y="0" width="19" height="21" fill="#552200"/><rect x="1064" y="0" width="19" height="21" fill="#803300"/><rect x="1083" y="0" width="19" height="21" fill="#aa4400"/><rect x="1102" y="0" width="19" height="21" fill="#d45500"/><rect x="1121" y="0" width="19" height="21" fill="#ff6600"/><rect x="1140" y="0" width="19" height="21" fill="#ff7f2a"/><rect x="1159" y="0" width="19" height="21" fill="#ff9955"/><rect x="1178" y="0" width="19" height="21" fill="#ffb380"/><rect x="1197" y="0" width="19" height="21" fill="#ffccaa"/><rect x="1216" y="0" width="19" height="21" fill="#ffe6d5"/><rect x="1235" y="0" width="19" height="21" fill="#28170b"/><rect x="1254" y="0" width="19" height="21" fill="#502d16"/><rect x="1273" y="0" width="19" height="21" fill="#784421"/><rect x="1292" y="0" width="19" height="21" fill="#a05a2c"/><rect x="1311" y="0" width="19" height="21" fill="#c87137"/><rect x="1330" y="0" width="19" height="21" fill="#d38d5f"/><rect x="1349" y="0" width="19" height="21" fill="#deaa87"/><rect x="1368" y="0" width="19" height="21" fill="#e9c6af"/><rect x="1387" y="0" width="19" height="21" fill="#f4e3d7"/><rect x="1406" y="0" width="19" height="21" fill="#241f1c"/><rect x="1425" y="0" width="19" height="21" fill="#483e37"/><rect x="1444" y="0" width="19" height="21" fill="#6c5d53"/><rect x="1463" y="0" width="19" height="21" fill="#917c6f"/><rect x="1482" y="0" width="19" height="21" fill="#ac9d93"/><rect x="1501" y="0" width="19" height="21" fill="#c8beb7"/><rect x="1520" y="0" width="19" height="21" fill="#e3dedb"/><rect x="1539" y="0" width="19" height="21" fill="#2b2200"/><rect x="1558" y="0" width="19" height="21" fill="#554400"/><rect x="1577" y="0" width="19" height="21" fill="#806600"/><rect x="1596" y="0" width="19" height="21" fill="#aa8800"/><rect x="1615" y="0" width="19" height="21" fill="#d4aa00"/><rect x="1634" y="0" width="19" height="21" fill="#ffcc00"/><rect x="1653" y="0" width="19" height="21" fill="#ffd42a"/><rect x="1672" y="0" width="19" height="21" fill="#ffdd55"/><rect x="1691" y="0" width="19" height="21" fill="#ffe680"/><rect x="1710" y="0" width="19" height="21" fill="#ffeeaa"/><rect x="1729" y="0" width="19" height="21" fill="#fff6d5"/><rect x="1748" y="0" width="19" height="21" fill="#28220b"/><rect x="1767" y="0" width="19" height="21" fill="#504416"/><rect x="1786" y="0" width="19" height="21" fill="#786721"/><rect x="1805" y="0" width="19" height="21" fill="#a0892c"/><rect x="1824" y="0" width="19" height="21" fill="#c8ab37"/><rect x="1843" y="0" width="19" height="21" fill="#d3bc5f"/><rect x="1862" y="0" width="19" height="21" fill="#decd87"/><rect x="1881" y="0" width="3" height="21" fill="#e9ddaf"/></svg>
<div style="position:absolute;left:0px;top:1033px;width:1920px;height:2px;background:#333333;"></div>
<div style="position:absolute;left:1884px;top:1012px;width:36px;height:23px;background:#3c3c3c;"></div>
<svg style="position:absolute;left:1897px;top:1023px;" width="10" height="12" viewBox="0 0 10 12"><path d="M8 1v10L2 6z" fill="#eeeeee"/></svg>
<div style="position:absolute;left:3px;top:1037px;width:426px;height:6px;background:#adadad;border-radius:3px;"></div>
<div style="position:absolute;left:3px;top:1048.15px;font-size:14px;line-height:14px;height:14px;color:#eeeeee;font-weight:400;white-space:pre;transform:scaleX(0.9823);transform-origin:0 0;">Fond :</div>
<div style="position:absolute;left:68px;top:1048.15px;font-size:14px;line-height:14px;height:14px;color:#eeeeee;font-weight:400;white-space:pre;transform:scaleX(1.0710);transform-origin:0 0;">N/A</div>
<div style="position:absolute;left:3px;top:1065.15px;font-size:14px;line-height:14px;height:14px;color:#eeeeee;font-weight:400;white-space:pre;transform:scaleX(0.9897);transform-origin:0 0;">Contour :</div>
<div style="position:absolute;left:68px;top:1065.15px;font-size:14px;line-height:14px;height:14px;color:#eeeeee;font-weight:400;white-space:pre;transform:scaleX(1.0710);transform-origin:0 0;">N/A</div>
<div style="position:absolute;left:96px;top:1055.15px;font-size:14px;line-height:14px;height:14px;color:#eeeeee;font-weight:400;white-space:pre;transform:scaleX(0.8569);transform-origin:0 0;">O :</div>
<div style="position:absolute;left:116px;top:1046px;width:118px;height:40px;background:#383838;border:1px solid #292929;border-radius:5px;box-sizing:border-box;"></div>
<div style="position:absolute;left:163px;top:1047px;width:1px;height:30px;background:#333;"></div>
<div style="position:absolute;left:198px;top:1047px;width:1px;height:30px;background:#333;"></div>
<div style="position:absolute;left:126px;top:1055.15px;font-size:14px;line-height:14px;height:14px;color:#959595;font-weight:400;white-space:pre;transform:scaleX(0.9846);transform-origin:0 0;">100</div>
<div style="position:absolute;left:176px;top:1063px;width:10px;height:1px;background:#5e5e5e;"></div>
<div style="position:absolute;left:211px;top:1063px;width:11px;height:1px;background:#5e5e5e;"></div>
<div style="position:absolute;left:216px;top:1058px;width:1px;height:11px;background:#5e5e5e;"></div>
<div style="position:absolute;left:236px;top:1046px;width:1px;height:29px;background:#333;"></div>
<svg style="position:absolute;left:247px;top:1054px;" width="18" height="16" viewBox="0 0 18 16"><path d="M1 9c2-3.5 4.5-5.3 8-5.3S15 5.5 17 9c-2 3.5-4.5 5.3-8 5.3S3 12.5 1 9z" fill="none" stroke="#f2f2f2" stroke-width="1.6"/><circle cx="9" cy="9" r="3" fill="#f2f2f2"/><path d="M3 4.5l-1-1.5M6 3l-.7-1.8M9 2.5V.8M12 3l.7-1.8M15 4.5l1-1.5" stroke="#f2f2f2" stroke-width="1"/></svg>
<svg style="position:absolute;left:285px;top:1056px;" width="17" height="16" viewBox="0 0 17 16"><path d="M10 8V4.5a3 3 0 0 1 6 0v1.5" fill="none" stroke="#f2f2f2" stroke-width="1.7"/><rect x="1" y="7.3" width="10.5" height="7.6" fill="#f2f2f2"/></svg>
<div style="position:absolute;left:311px;top:1046px;width:132px;height:40px;background:#464646;border:1px solid #2c2c2c;border-radius:5px;box-sizing:border-box;"></div>
<div style="position:absolute;left:323px;top:1054.15px;font-size:14px;line-height:14px;height:14px;color:#f2f2f2;font-weight:700;white-space:pre;transform:scaleX(0.8910);transform-origin:0 0;">•carré bleu</div>
<svg style="position:absolute;left:419px;top:1060px;" width="12" height="7" viewBox="0 0 12 7"><path d="M1 1h10l-5 5z" fill="#f0f0f0"/></svg>
<div style="position:absolute;left:447px;top:1046.05px;font-size:14px;line-height:17px;color:#eeeeee;white-space:pre;transform-origin:0 0;transform:scaleX(1.0798);" id="msg1"><b>Ctrl</b> : cliquer pour sélectionner dans les groupes ; cliquer-glisser pour déplacer horizontalement/verticalement; <b>Maj</b> : cliquer pour inverser l'état de sélection ; cliquer-<br>glisser pour sélectionner par rectangle</div>
<div style="position:absolute;left:1547px;top:1046px;width:1px;height:29px;background:#333;"></div>
<div style="position:absolute;left:1558px;top:1048.15px;font-size:14px;line-height:14px;height:14px;color:#eeeeee;font-weight:400;white-space:pre;transform:scaleX(0.9343);transform-origin:0 0;">X :</div>
<div style="position:absolute;left:1588px;top:1048.15px;font-size:14px;line-height:14px;height:14px;color:#eeeeee;font-weight:400;white-space:pre;transform:scaleX(0.9807);transform-origin:0 0;">353,01</div>
<div style="position:absolute;left:1558px;top:1065.15px;font-size:14px;line-height:14px;height:14px;color:#eeeeee;font-weight:400;white-space:pre;transform:scaleX(0.9481);transform-origin:0 0;">Y :</div>
<div style="position:absolute;left:1588px;top:1065.15px;font-size:14px;line-height:14px;height:14px;color:#eeeeee;font-weight:400;white-space:pre;transform:scaleX(0.9807);transform-origin:0 0;">220,05</div>
<div style="position:absolute;left:1641px;top:1056.15px;font-size:14px;line-height:14px;height:14px;color:#eeeeee;font-weight:400;white-space:pre;transform:scaleX(0.8566);transform-origin:0 0;">Z :</div>
<div style="position:absolute;left:1666px;top:1046px;width:100px;height:40px;background:#383838;border:1px solid #292929;border-radius:5px;box-sizing:border-box;"></div>
<div style="position:absolute;left:1721px;top:1047px;width:1px;height:30px;background:#333;"></div>
<div style="position:absolute;left:1742px;top:1047px;width:1px;height:30px;background:#333;"></div>
<div style="position:absolute;left:1678px;top:1056.15px;font-size:14px;line-height:14px;height:14px;color:#eeeeee;font-weight:400;white-space:pre;transform:scaleX(0.9632);transform-origin:0 0;">70%</div>
<div style="position:absolute;left:1727px;top:1063px;width:10px;height:1px;background:#eeeeee;"></div>
<div style="position:absolute;left:1748px;top:1063px;width:11px;height:1px;background:#eeeeee;"></div>
<div style="position:absolute;left:1753px;top:1058px;width:1px;height:11px;background:#eeeeee;"></div>
<div style="position:absolute;left:1776px;top:1056.15px;font-size:14px;line-height:14px;height:14px;color:#eeeeee;font-weight:400;white-space:pre;transform:scaleX(0.8943);transform-origin:0 0;">R :</div>
<div style="position:absolute;left:1802px;top:1046px;width:108px;height:40px;background:#383838;border:1px solid #292929;border-radius:5px;box-sizing:border-box;"></div>
<div style="position:absolute;left:1865px;top:1047px;width:1px;height:30px;background:#333;"></div>
<div style="position:absolute;left:1886px;top:1047px;width:1px;height:30px;background:#333;"></div>
<div style="position:absolute;left:1816px;top:1056.15px;font-size:14px;line-height:14px;height:14px;color:#eeeeee;font-weight:400;white-space:pre;transform:scaleX(1.0043);transform-origin:0 0;">0,00°</div>
<div style="position:absolute;left:1871px;top:1063px;width:10px;height:1px;background:#eeeeee;"></div>
<div style="position:absolute;left:1892px;top:1063px;width:11px;height:1px;background:#eeeeee;"></div>
<div style="position:absolute;left:1897px;top:1058px;width:1px;height:11px;background:#eeeeee;"></div>
<div style="position:absolute;left:1836px;top:254px;width:36px;height:1px;background:#363636;"></div>
<div style="position:absolute;left:1836px;top:337px;width:36px;height:1px;background:#363636;"></div>
<div style="position:absolute;left:1836px;top:422px;width:36px;height:1px;background:#363636;"></div>
<div style="position:absolute;left:1836px;top:541px;width:36px;height:1px;background:#363636;"></div>
<div style="position:absolute;left:1836px;top:695px;width:36px;height:1px;background:#363636;"></div>
<div style="position:absolute;left:1836px;top:815px;width:36px;height:1px;background:#363636;"></div>
<div style="position:absolute;left:1836px;top:898px;width:36px;height:1px;background:#363636;"></div>
<svg style="position:absolute;left:1845px;top:116px;" width="18" height="18" viewBox="0 0 18 18"><path d="M3.5 1.5h7l4 4v6M12 16.5H3.5v-15" fill="none" stroke="#f2f2f2" stroke-width="1.3" stroke-linejoin="round"/><path d="M10 1.5v4h4.5" fill="#f2f2f2"/><path d="M14.5 12v5M12 14.5h5" stroke="#f2f2f2" stroke-width="1.2"/></svg>
<svg style="position:absolute;left:1845px;top:151px;" width="18" height="18" viewBox="0 0 18 18"><path d="M2.5 4.5v9.5h1.5M2.5 4.5h4l1 1h7.5v8.5" fill="none" stroke="#f2f2f2" stroke-width="1.1"/><rect x="5" y="6" width="10" height="10" fill="#3c3c3c" stroke="#f2f2f2" stroke-width="1.2"/><path d="M7 9h6M7 11h6M7 13h4" stroke="#f2f2f2" stroke-width="1"/></svg>
<svg style="position:absolute;left:1845px;top:185px;" width="18" height="18" viewBox="0 0 18 18"><path d="M7.5 2h3v6h2.5l-4 5-4-5h2.5z" fill="none" stroke="#f2f2f2" stroke-width="1.1"/><path d="M3.5 16h11" stroke="#f2f2f2" stroke-width="1.4"/></svg>
<svg style="position:absolute;left:1845px;top:221px;" width="18" height="18" viewBox="0 0 18 18"><rect x="5" y="2" width="8" height="4" fill="none" stroke="#f2f2f2" stroke-width="1.2"/><rect x="2" y="6" width="14" height="7" rx="2" fill="none" stroke="#f2f2f2" stroke-width="1.4"/><rect x="5" y="11" width="8" height="5.5" fill="#3c3c3c" stroke="#f2f2f2" stroke-width="1.2"/><path d="M6.5 13.5h5" stroke="#f2f2f2" stroke-width="1"/></svg>
<svg style="position:absolute;left:1845px;top:269px;" width="18" height="18" viewBox="0 0 18 18"><path d="M6 2h5.5l4 4v10H6v-4" fill="none" stroke="#f2f2f2" stroke-width="1.6"/><path d="M2 9h7" stroke="#f2f2f2" stroke-width="1.6"/><path d="M7 6l3.5 3-3.5 3z" fill="#f2f2f2"/></svg>
<svg style="position:absolute;left:1845px;top:304px;" width="18" height="18" viewBox="0 0 18 18"><path d="M11 11.5V16H3V2h5.5L11 4.5v2.5" fill="none" stroke="#f2f2f2" stroke-width="1.8"/><path d="M8 9h7" stroke="#f2f2f2" stroke-width="1.6"/><path d="M13 6l3.5 3-3.5 3z" fill="#f2f2f2"/></svg>
<svg style="position:absolute;left:1845px;top:354px;" width="18" height="18" viewBox="0 0 18 18"><path d="M3.5 12a6.5 6.5 0 0 1 12 0" fill="none" stroke="#f2f2f2" stroke-width="1.3"/><path d="M1.5 9.5l2.5 4 3-3z" fill="#f2f2f2"/></svg>
<svg style="position:absolute;left:1845px;top:388px;" width="18" height="18" viewBox="0 0 18 18"><path d="M3.5 6a6.5 6.5 0 0 0 12 0" fill="none" stroke="#8a8a8a" stroke-width="1.2"/><path d="M16.5 3.5l-1 4-3-2z" fill="#8a8a8a"/></svg>
<svg style="position:absolute;left:1845px;top:438px;" width="18" height="18" viewBox="0 0 18 18"><path d="M3 4v11h1M3 4h9" fill="none" stroke="#f2f2f2" stroke-width="1.1"/><rect x="5" y="5.5" width="10" height="11" fill="#3c3c3c" stroke="#f2f2f2" stroke-width="1.2"/><path d="M7 8.5h6M7 10.5h6M7 12.5h4" stroke="#f2f2f2" stroke-width="1"/></svg>
<svg style="position:absolute;left:1845px;top:473px;" width="18" height="18" viewBox="0 0 18 18"><path d="M6.5 1.5l4 11M11.5 1.5l-4 11" stroke="#f2f2f2" stroke-width="1.2"/><circle cx="6" cy="14.5" r="2" fill="none" stroke="#f2f2f2" stroke-width="1.2"/><circle cx="12" cy="14.5" r="2" fill="none" stroke="#f2f2f2" stroke-width="1.2"/></svg>
<svg style="position:absolute;left:1845px;top:508px;" width="18" height="18" viewBox="0 0 18 18"><path d="M3 4v12h1M3 4h2M11 4h2" fill="none" stroke="#f2f2f2" stroke-width="1.1"/><rect x="5.5" y="2" width="5" height="3.5" fill="#f2f2f2"/><rect x="5" y="6" width="10" height="10.5" fill="#3c3c3c" stroke="#f2f2f2" stroke-width="1.2"/><path d="M7 9h6M7 11h6M7 13h4" stroke="#f2f2f2" stroke-width="1"/></svg>
<svg style="position:absolute;left:1845px;top:557px;" width="18" height="18" viewBox="0 0 18 18"><circle cx="8" cy="8" r="6.8" fill="#f2f2f2"/><path d="M12.5 12.5l4 4" stroke="#f2f2f2" stroke-width="2.4" stroke-linecap="round"/><rect x="4.5" y="4.5" width="7" height="7" fill="none" stroke="#3c3c3c" stroke-width="1" stroke-dasharray="1 1"/></svg>
<svg style="position:absolute;left:1845px;top:592px;" width="18" height="18" viewBox="0 0 18 18"><circle cx="8" cy="8" r="6.8" fill="#f2f2f2"/><path d="M12.5 12.5l4 4" stroke="#f2f2f2" stroke-width="2.4" stroke-linecap="round"/><rect x="4.5" y="4.5" width="7" height="7" fill="none" stroke="#3c3c3c" stroke-width="1.4"/></svg>
<svg style="position:absolute;left:1845px;top:627px;" width="18" height="18" viewBox="0 0 18 18"><circle cx="8" cy="8" r="6.8" fill="#f2f2f2"/><path d="M12.5 12.5l4 4" stroke="#f2f2f2" stroke-width="2.4" stroke-linecap="round"/><rect x="5.5" y="3.5" width="5" height="9" fill="none" stroke="#3c3c3c" stroke-width="1.4"/></svg>
<svg style="position:absolute;left:1845px;top:661px;" width="18" height="18" viewBox="0 0 18 18"><rect x="5" y="3" width="8" height="12" fill="#f2f2f2"/><path d="M2.5 5V2.5H5M13 2.5h2.5V5M15.5 13v2.5H13M5 15.5H2.5V13" fill="none" stroke="#f2f2f2" stroke-width="1.1"/></svg>
<svg style="position:absolute;left:1845px;top:711px;" width="18" height="18" viewBox="0 0 18 18"><rect x="2" y="2" width="9" height="9" fill="#f2f2f2"/><rect x="6.5" y="6.5" width="9.5" height="9.5" fill="#3c3c3c"/><rect x="7.5" y="7.5" width="8.5" height="8.5" fill="#f2f2f2"/></svg>
<svg style="position:absolute;left:1845px;top:746px;" width="18" height="18" viewBox="0 0 18 18"><rect x="2" y="2" width="9" height="9" fill="#f2f2f2"/><rect x="6" y="6" width="10" height="10" fill="#3c3c3c"/><rect x="7" y="7" width="9" height="9" fill="#f2f2f2"/><path d="M9.5 11V9.5a2 2 0 0 1 4 0V11" fill="none" stroke="#3c3c3c" stroke-width="1"/><rect x="9" y="11" width="5" height="3.5" fill="#3c3c3c"/></svg>
<svg style="position:absolute;left:1845px;top:780px;" width="18" height="18" viewBox="0 0 18 18"><rect x="2" y="2" width="9" height="9" fill="#f2f2f2"/><rect x="6" y="6" width="10" height="10" fill="#3c3c3c"/><rect x="7" y="7" width="9" height="9" fill="#f2f2f2"/><path d="M9.5 11V9.5a2 2 0 0 1 4 0V11" fill="none" stroke="#3c3c3c" stroke-width="1"/><rect x="9" y="11" width="5" height="3.5" fill="#3c3c3c"/></svg>
<svg style="position:absolute;left:1845px;top:830px;" width="18" height="18" viewBox="0 0 18 18"><circle cx="9" cy="8" r="3.3" fill="#f2f2f2"/><path d="M9.5 12l4.5-2v4z" fill="#f2f2f2"/><path d="M1.5 1.5h3M1.5 1.5v3M16.5 1.5h-3M16.5 1.5v3M1.5 16.5h3M1.5 16.5v-3M16.5 16.5h-3M16.5 16.5v-3" stroke="#f2f2f2" stroke-width="2"/></svg>
<svg style="position:absolute;left:1845px;top:864px;" width="18" height="18" viewBox="0 0 18 18"><circle cx="8.5" cy="8" r="3.3" fill="#f2f2f2"/><path d="M9.5 12l4.5-2v4z" fill="#f2f2f2"/><path d="M2 2h2M2 2v2M16 2h-2M16 2v2M2 16h2M2 16v-2M16 16h-2M16 16v-2" stroke="#f2f2f2" stroke-width="1.6" stroke-dasharray="1.2 1"/></svg>
<svg style="position:absolute;left:1845px;top:913px;" width="18" height="18" viewBox="0 0 18 18"><path d="M1.5 15V1.5h13" fill="none" stroke="#f2f2f2" stroke-width="1.1"/><path d="M16 2l1 1-7 9-2-1.5z" fill="#f2f2f2"/><path d="M7.5 11l2 1.5c-.5 2.5-2.5 3.5-6.5 4 1.5-1 2.3-2 2.3-3.5z" fill="#f2f2f2"/></svg>
<svg style="position:absolute;left:1850px;top:987px;" width="8" height="10" viewBox="0 0 8 10"><path d="M1 0v10l6-5z" fill="#f2f2f2"/></svg>
<div style="position:absolute;left:1880px;top:108px;width:36px;height:34px;background:#262626;border-radius:5px;"></div>
<div style="position:absolute;left:1880px;top:346px;width:36px;height:34px;background:#262626;border-radius:5px;"></div>
<div style="position:absolute;left:1880px;top:451px;width:36px;height:34px;background:#262626;border-radius:5px;"></div>
<div style="position:absolute;left:1880px;top:570px;width:36px;height:34px;background:#262626;border-radius:5px;"></div>
<div style="position:absolute;left:1880px;top:759px;width:36px;height:34px;background:#262626;border-radius:5px;"></div>
<div style="position:absolute;left:1880px;top:795px;width:36px;height:34px;background:#262626;border-radius:5px;"></div>
<div style="position:absolute;left:1880px;top:149px;width:36px;height:1px;background:#363636;"></div>
<div style="position:absolute;left:1880px;top:338px;width:36px;height:1px;background:#363636;"></div>
<div style="position:absolute;left:1880px;top:563px;width:36px;height:1px;background:#363636;"></div>
<div style="position:absolute;left:1880px;top:716px;width:36px;height:1px;background:#363636;"></div>
<svg style="position:absolute;left:1889px;top:116px;" width="18" height="18" viewBox="0 0 18 18"><path d="M9 3.5a5.5 5.5 0 0 1 0 11" fill="none" stroke="#f2f2f2" stroke-width="3"/><circle cx="7" cy="3.5" r="1.6" fill="#f2f2f2"/><circle cx="7" cy="14.5" r="1.6" fill="#f2f2f2"/><text x="2.3" y="11.5" font-family="Liberation Sans" font-size="7" font-weight="700" fill="#f2f2f2">s</text></svg>
<svg style="position:absolute;left:1889px;top:165px;" width="18" height="18" viewBox="0 0 18 18"><path d="M9 3.5a5.5 5.5 0 0 1 0 11" fill="none" stroke="#f2f2f2" stroke-width="3"/><circle cx="7" cy="3.5" r="1.6" fill="#f2f2f2"/><circle cx="7" cy="14.5" r="1.6" fill="#f2f2f2"/><text x="2.3" y="11.5" font-family="Liberation Sans" font-size="7" font-weight="700" fill="#f2f2f2">s</text></svg>
<svg style="position:absolute;left:1889px;top:354px;" width="18" height="18" viewBox="0 0 18 18"><path d="M9 3.5a5.5 5.5 0 0 1 0 11" fill="none" stroke="#f2f2f2" stroke-width="3"/><circle cx="7" cy="3.5" r="1.6" fill="#f2f2f2"/><circle cx="7" cy="14.5" r="1.6" fill="#f2f2f2"/><text x="2.3" y="11.5" font-family="Liberation Sans" font-size="7" font-weight="700" fill="#f2f2f2">s</text></svg>
<svg style="position:absolute;left:1889px;top:578px;" width="18" height="18" viewBox="0 0 18 18"><path d="M9 3.5a5.5 5.5 0 0 1 0 11" fill="none" stroke="#f2f2f2" stroke-width="3"/><circle cx="7" cy="3.5" r="1.6" fill="#f2f2f2"/><circle cx="7" cy="14.5" r="1.6" fill="#f2f2f2"/><text x="2.3" y="11.5" font-family="Liberation Sans" font-size="7" font-weight="700" fill="#f2f2f2">s</text></svg>
<svg style="position:absolute;left:1889px;top:199px;" width="18" height="18" viewBox="0 0 18 18"><path d="M2 2.5v14M2 2.5h3M8 2.5h3M14 2.5h2M2 6v2M2 11v2" stroke="#7d7d7d" stroke-width="1.6"/><path d="M2.5 2.5h14" stroke="#7d7d7d" stroke-width="1.6" stroke-dasharray="3 1.5"/><path d="M12 4.5l3.5 3.5h-7z" fill="#7d7d7d"/><path d="M4.5 12l3.5-3.5v7z" fill="#7d7d7d"/></svg>
<svg style="position:absolute;left:1889px;top:234px;" width="18" height="18" viewBox="0 0 18 18"><path d="M15.5 1.5v15.5M1.5 15.5h15.5" stroke="#7d7d7d" stroke-width="1.6" stroke-dasharray="3 1.5"/><path d="M14 4v10H4z" fill="#7d7d7d"/><path d="M15.5 13l2.5 2.5-2.5 2.5-2.5-2.5z" fill="#7d7d7d"/></svg>
<svg style="position:absolute;left:1889px;top:270px;" width="18" height="18" viewBox="0 0 18 18"><rect x="4.5" y="3" width="12" height="12" fill="none" stroke="#7d7d7d" stroke-width="1.6" stroke-dasharray="3 1.5"/><path d="M3 3.5v12" stroke="#7d7d7d" stroke-width="1.4"/><path d="M3 1l2.5 3h-5zM3 17.5l2.5-3h-5z" fill="#7d7d7d"/><path d="M6 9h6" stroke="#7d7d7d" stroke-width="1.4"/><path d="M12 6l3 3-3 3z" fill="#7d7d7d"/></svg>
<svg style="position:absolute;left:1889px;top:304px;" width="18" height="18" viewBox="0 0 18 18"><rect x="2" y="2" width="14" height="14" fill="none" stroke="#7d7d7d" stroke-width="1.6" stroke-dasharray="3 1.5"/><path d="M9 4.5v9M4.5 9h9" stroke="#7d7d7d" stroke-width="1.6"/></svg>
<svg style="position:absolute;left:1889px;top:390px;" width="18" height="18" viewBox="0 0 18 18"><path d="M3 16c0-7 3-10 6-10s6 3 6 10" fill="none" stroke="#f2f2f2" stroke-width="1.4"/><rect x="7.3" y="3.5" width="3.4" height="3.4" fill="#f2f2f2"/><path d="M2 5h4M12 5h4" stroke="#f2f2f2" stroke-width="1"/><circle cx="2" cy="5" r="1.3" fill="#f2f2f2"/><circle cx="16" cy="5" r="1.3" fill="#f2f2f2"/></svg>
<svg style="position:absolute;left:1889px;top:423px;" width="18" height="18" viewBox="0 0 18 18"><path d="M1.5 16L16.5 2M1 11.5l16-3" stroke="#f2f2f2" stroke-width="1"/><circle cx="9" cy="9" r="2.8" fill="#f2f2f2"/></svg>
<svg style="position:absolute;left:1889px;top:458px;" width="18" height="18" viewBox="0 0 18 18"><path d="M3 2.5c4 0 8 2.5 8 7" fill="none" stroke="#f2f2f2" stroke-width="1.5"/><path d="M16 8c0 4-3 6.5-6.5 6.5" fill="none" stroke="#f2f2f2" stroke-width="1.1"/><path d="M8.5 12l3 1.5-2 2.5-2.5-2z" fill="#f2f2f2"/></svg>
<svg style="position:absolute;left:1889px;top:496px;" width="18" height="18" viewBox="0 0 18 18"><path d="M2 15c0-6 3-9 7-9s7 3 7 9" fill="none" stroke="#f2f2f2" stroke-width="1.4"/><circle cx="9" cy="6" r="2.3" fill="#f2f2f2"/></svg>
<svg style="position:absolute;left:1889px;top:529px;" width="18" height="18" viewBox="0 0 18 18"><path d="M7.5 1v16M15.5 1v16" stroke="#f2f2f2" stroke-width="1.3"/><path d="M4 3v12" stroke="#f2f2f2" stroke-width="1.3"/><path d="M4 1l2.5 3h-5zM4 17l2.5-3h-5z" fill="#f2f2f2"/><path d="M8.5 6l4 3-4 3z" fill="#f2f2f2"/><circle cx="15.5" cy="9" r="2.3" fill="#f2f2f2"/></svg>
<svg style="position:absolute;left:1889px;top:612px;" width="18" height="18" viewBox="0 0 18 18"><path d="M7.5 1.5v15M10.5 1.5v15M1.5 7.5h15M1.5 10.5h15" stroke="#f2f2f2" stroke-width="1"/><rect x="3.5" y="3.5" width="3.5" height="3.5" fill="#f2f2f2"/><rect x="11" y="3.5" width="3.5" height="3.5" fill="#f2f2f2"/><rect x="3.5" y="11" width="3.5" height="3.5" fill="#f2f2f2"/><rect x="11" y="11" width="3.5" height="3.5" fill="#f2f2f2"/></svg>
<svg style="position:absolute;left:1889px;top:648px;" width="18" height="18" viewBox="0 0 18 18"><path d="M9 6v12M4 12h10M6.5 9.5h5M6.5 14.5h5" stroke="#f2f2f2" stroke-width="1"/><path d="M5 5a4 4 0 1 1 6 3" fill="none" stroke="#f2f2f2" stroke-width="1.8"/><path d="M3 3l3.5 1-2 2.5z" fill="#f2f2f2"/></svg>
<svg style="position:absolute;left:1889px;top:682px;" width="18" height="18" viewBox="0 0 18 18"><path d="M5 13L9 2h1.5l4 11h-2.3l-1-3H7.3l-1 3zM8 8h3l-1.5-4z" fill="#f2f2f2"/><path d="M4 15.5h12" stroke="#f2f2f2" stroke-width="1.4"/><path d="M1 15.5l3-2v4z" fill="#f2f2f2"/></svg>
<svg style="position:absolute;left:1889px;top:732px;" width="18" height="18" viewBox="0 0 18 18"><rect x="4" y="2.5" width="10" height="13" fill="none" stroke="#f2f2f2" stroke-width="1.3"/></svg>
<svg style="position:absolute;left:1889px;top:766px;" width="18" height="18" viewBox="0 0 18 18"><rect x="2" y="2" width="14" height="14" fill="#f2f2f2"/><path d="M4.5 2v14M7 2v14M9.5 2v14M12 2v14M2 4.5h14M2 7h14M2 9.5h14M2 12h14" stroke="#262626" stroke-width="1"/></svg>
<svg style="position:absolute;left:1889px;top:802px;" width="18" height="18" viewBox="0 0 18 18"><path d="M5.5 2v14M1.5 12.5h15" stroke="#f2f2f2" stroke-width="1.2"/></svg>
<div style="position:absolute;left:1414px;top:104px;width:16px;height:17px;background:#2f2f2f;border-radius:3px;"></div>
<svg style="position:absolute;left:1415px;top:106px;" width="14" height="14" viewBox="0 0 14 14"><rect x="1.5" y="1.5" width="11" height="11" rx="2" fill="none" stroke="#f2f2f2" stroke-width="1.1"/><path d="M5.3 4.6L7.3 3.5V10.5" fill="none" stroke="#f2f2f2" stroke-width="1.1"/></svg>
<div style="position:absolute;left:1413px;top:994px;width:17px;height:17px;background:#2f2f2f;border-radius:3px;"></div>
<svg style="position:absolute;left:1414px;top:995px;" width="15" height="15" viewBox="0 0 15 15"><circle cx="7.5" cy="5" r="3" fill="none" stroke="#9a9a9a" stroke-width="1"/><circle cx="5" cy="10" r="3" fill="none" stroke="#9a9a9a" stroke-width="1"/><circle cx="10" cy="10" r="3" fill="none" stroke="#9a9a9a" stroke-width="1"/></svg></body></html>
